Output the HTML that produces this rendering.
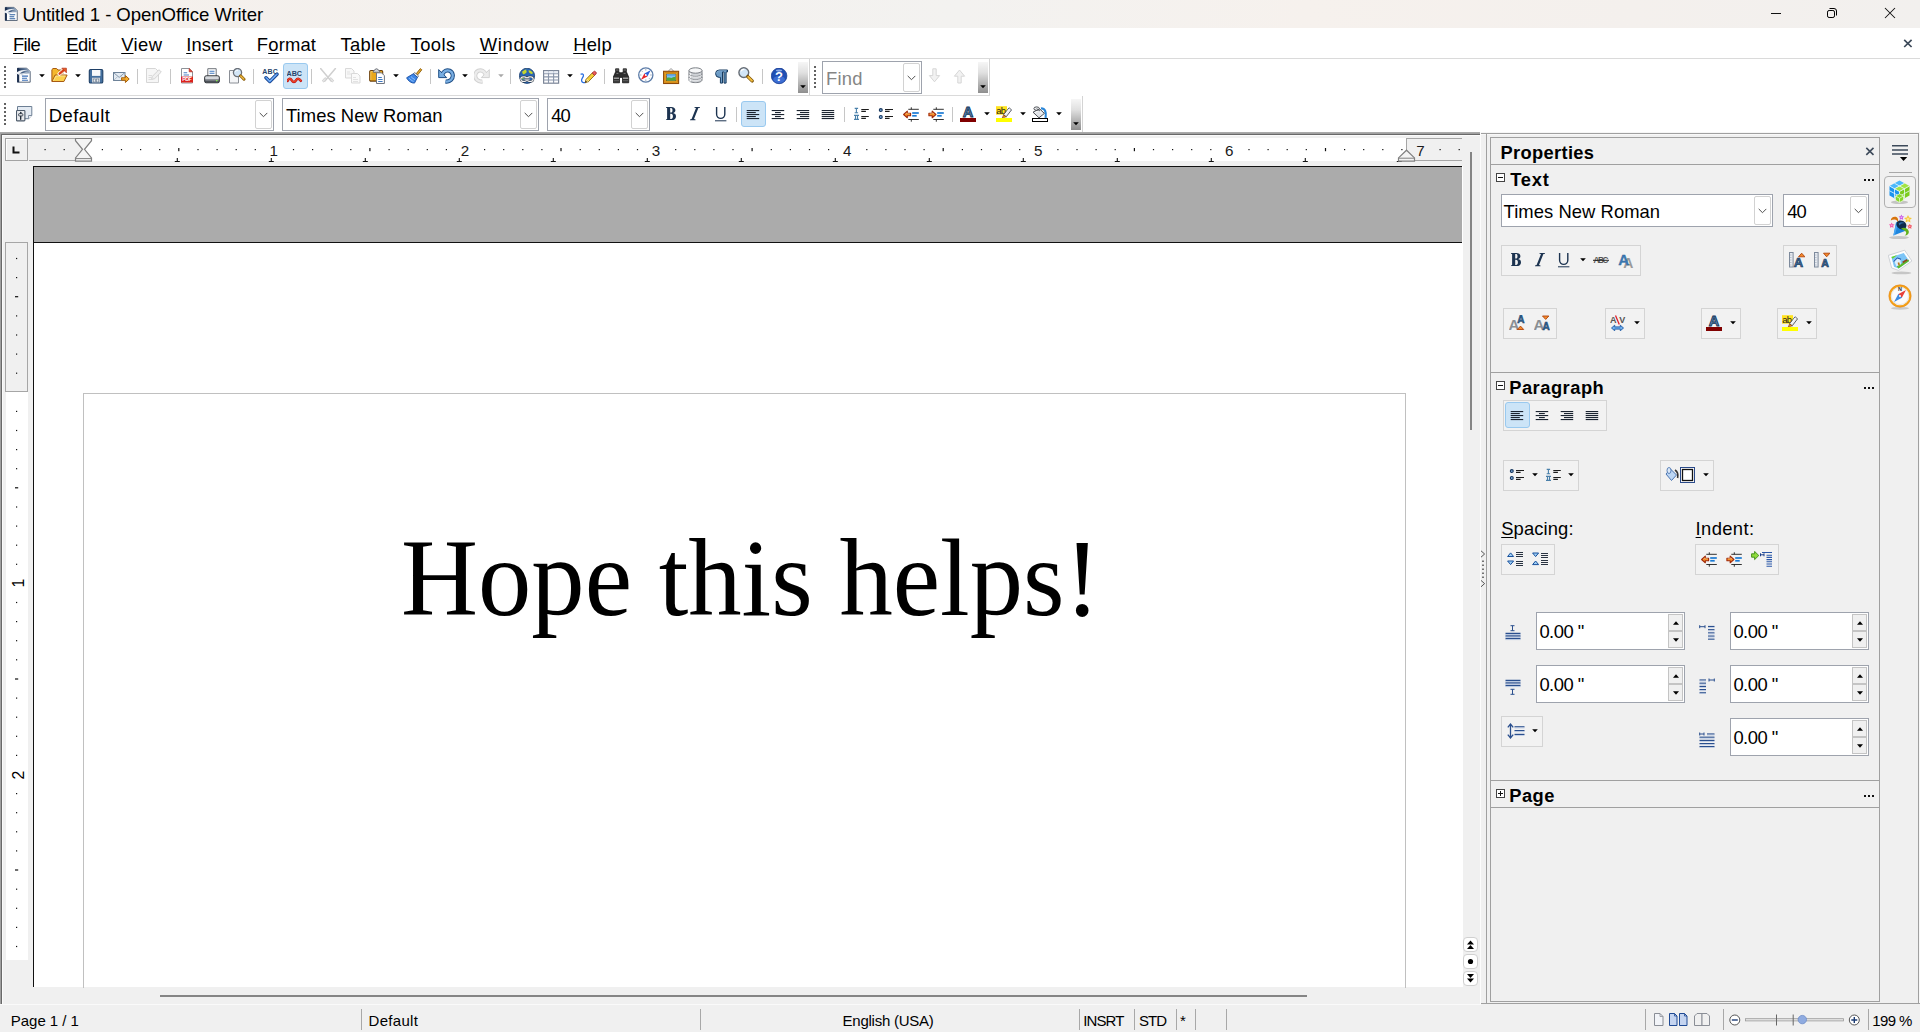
<!DOCTYPE html><html><head><meta charset="utf-8"><title>Untitled 1 - OpenOffice Writer</title><style>html,body{margin:0;padding:0;}body{width:1920px;height:1032px;overflow:hidden;background:#fff;position:relative;font-family:"Liberation Sans",sans-serif;}.a{position:absolute;display:block;}.t{white-space:nowrap;}u{text-decoration-thickness:1.2px;text-underline-offset:2.2px;}</style></head><body>
<div class="a" style="left:0px;top:0px;width:1920px;height:28px;background:linear-gradient(90deg,#f5f0ec,#f4f1ee 30%,#f3f2f0 50%,#f6f1ed 68%,#f4f0ed 85%,#f2f0ee);"></div>
<svg class="a" style="left:3px;top:5.6px" width="15" height="15.5" viewBox="0 0 16 16"><defs><linearGradient id="g0" x1="0" x2="1" y1="0" y2="0"><stop offset="0" stop-color="#1f3556"/><stop offset="0.45" stop-color="#4a6488"/><stop offset="1" stop-color="#a9b9cc"/></linearGradient></defs><path d="M2.5 1.2h9.3l3.4 3.400v10.600h-12.700z" fill="#fdfdfd" stroke="#4a586c" stroke-width="0.900"/><path d="M2.5 1.2h9.3l3.4 3.400v1.800h-12.700z" fill="url(#g0)"/><rect x="2.100" y="1.200" width="2.100" height="14" fill="#1d3050"/><path d="M0 6.800c2.800-3.200 7.400-4.600 12.600-3.600c-4.200 0.500-7 2-8.800 4.600c-1.200-0.900-2.400-1.200-3.800-1z" fill="#f0f3f7"/><path d="M5 8c1.800-1.700 4.400-2.600 8.600-2.800c-3.400 0.800-5.400 1.900-6.800 3.400z" fill="#cfd8e2"/><path d="M7 9.100h6M7 11.200h5M7 13.300h6" stroke="#2d5f9e" stroke-width="1.100"/></svg>
<span class="a t" id="title" style="left:22.40px;top:5.51px;font-size:18.6px;line-height:18.6px;font-family:'Liberation Sans',sans-serif;color:#000;letter-spacing:-0.084px;">Untitled 1 - OpenOffice Writer</span>
<div class="a" style="left:1771px;top:13px;width:10px;height:1px;background:#111;"></div>
<svg class="a" style="left:1826px;top:7px" width="12" height="12" viewBox="0 0 12 12"><rect x="1.5" y="3.5" width="7" height="7" rx="1.600" fill="none" stroke="#000" stroke-width="1"/><path d="M3.500 1.500h4.500a2.500 2.500 0 0 1 2.500 2.500v4.500" fill="none" stroke="#000" stroke-width="1"/></svg>
<svg class="a" style="left:1884px;top:7px" width="12" height="12" viewBox="0 0 12 12"><path d="M1 1l10 10M11 1l-10 10" stroke="#111" stroke-width="1.05"/></svg>
<div class="a" style="left:0px;top:28px;width:1920px;height:30px;background:#fff;"></div>
<span class="a t" id="mFile" style="left:13.00px;top:35.62px;font-size:18.4px;line-height:18.4px;font-family:'Liberation Sans',sans-serif;color:#000;letter-spacing:-0.667px;"><u>F</u>ile</span>
<span class="a t" id="mEdit" style="left:66.20px;top:35.62px;font-size:18.4px;line-height:18.4px;font-family:'Liberation Sans',sans-serif;color:#000;letter-spacing:-0.433px;"><u>E</u>dit</span>
<span class="a t" id="mView" style="left:121.20px;top:35.62px;font-size:18.4px;line-height:18.4px;font-family:'Liberation Sans',sans-serif;color:#000;letter-spacing:0.400px;"><u>V</u>iew</span>
<span class="a t" id="mInsert" style="left:186.20px;top:35.62px;font-size:18.4px;line-height:18.4px;font-family:'Liberation Sans',sans-serif;color:#000;letter-spacing:0.120px;"><u>I</u>nsert</span>
<span class="a t" id="mFormat" style="left:256.80px;top:35.62px;font-size:18.4px;line-height:18.4px;font-family:'Liberation Sans',sans-serif;color:#000;letter-spacing:0.180px;">F<u>o</u>rmat</span>
<span class="a t" id="mTable" style="left:340.40px;top:35.62px;font-size:18.4px;line-height:18.4px;font-family:'Liberation Sans',sans-serif;color:#000;letter-spacing:0.350px;">T<u>a</u>ble</span>
<span class="a t" id="mTools" style="left:410.60px;top:35.62px;font-size:18.4px;line-height:18.4px;font-family:'Liberation Sans',sans-serif;color:#000;letter-spacing:0.400px;"><u>T</u>ools</span>
<span class="a t" id="mWindow" style="left:479.80px;top:35.62px;font-size:18.4px;line-height:18.4px;font-family:'Liberation Sans',sans-serif;color:#000;letter-spacing:0.660px;"><u>W</u>indow</span>
<span class="a t" id="mHelp" style="left:573.20px;top:35.62px;font-size:18.4px;line-height:18.4px;font-family:'Liberation Sans',sans-serif;color:#000;letter-spacing:0.201px;"><u>H</u>elp</span>
<svg class="a" style="left:1903px;top:39px" width="10" height="9" viewBox="0 0 10 9"><path d="M1.2 0.8l7.4 7.2M8.6 0.8l-7.4 7.2" stroke="#3d4a5a" stroke-width="1.7"/></svg>
<div class="a" style="left:0px;top:58px;width:1920px;height:1px;background:#dadada;"></div>
<div class="a" style="left:0px;top:59px;width:1920px;height:36px;background:#fff;"></div>
<div class="a" style="left:4px;top:66px;width:2px;height:2px;background:#626262;"></div>
<div class="a" style="left:4px;top:70px;width:2px;height:2px;background:#626262;"></div>
<div class="a" style="left:4px;top:74px;width:2px;height:2px;background:#626262;"></div>
<div class="a" style="left:4px;top:78px;width:2px;height:2px;background:#626262;"></div>
<div class="a" style="left:4px;top:82px;width:2px;height:2px;background:#626262;"></div>
<div class="a" style="left:4px;top:86px;width:2px;height:2px;background:#626262;"></div>
<svg class="a" style="left:15px;top:67px" width="17" height="17" viewBox="0 0 17 17"><defs><linearGradient id="g1" x1="0" x2="1" y1="0" y2="0"><stop offset="0" stop-color="#1f3556"/><stop offset="0.45" stop-color="#4a6488"/><stop offset="1" stop-color="#a9b9cc"/></linearGradient></defs><path d="M2.5 1.2h9.3l3.4 3.400v10.600h-12.700z" fill="#fdfdfd" stroke="#4a586c" stroke-width="0.900"/><path d="M2.5 1.2h9.3l3.4 3.400v1.800h-12.700z" fill="url(#g1)"/><rect x="2.100" y="1.200" width="2.100" height="14" fill="#1d3050"/><path d="M0 6.800c2.800-3.200 7.400-4.600 12.600-3.600c-4.200 0.500-7 2-8.800 4.600c-1.200-0.900-2.400-1.200-3.800-1z" fill="#f0f3f7"/><path d="M5 8c1.800-1.700 4.400-2.600 8.600-2.800c-3.400 0.800-5.400 1.900-6.800 3.400z" fill="#cfd8e2"/><path d="M7 9.100h6M7 11.200h5M7 13.300h6" stroke="#3b6fb6" stroke-width="1.100"/></svg>
<svg class="a" style="left:51px;top:67px" width="17" height="17" viewBox="0 0 17 17"><path d="M0.900 14.200v-11.600l1.100-1.100h3.600l1.400 1.500h5.200v3.400" fill="#f4b82e" stroke="#a85a12" stroke-width="1" stroke-linejoin="round"/><path d="M0.900 14.500l3.200-6.500h12l-3.200 6.500z" fill="#fbd04e" stroke="#a85a12" stroke-width="1" stroke-linejoin="round"/><path d="M2.600 13.600l2.400-4.600h9.400" fill="none" stroke="#fde9a0" stroke-width="0.800"/><path d="M8.300 6.900l4.300-3.600" stroke="#fff" stroke-width="3.800" stroke-linecap="round"/><path d="M10.400 0.900h5.300v5.300z" fill="#fff" stroke="#fff" stroke-width="1.400" stroke-linejoin="round"/><path d="M8.600 6.700l4.200-3.500" stroke="#d8421a" stroke-width="2.300" stroke-linecap="round"/><path d="M10.800 1.200h4.600v4.600z" fill="#e85a24" stroke="#b02c10" stroke-width="0.700" stroke-linejoin="round"/></svg>
<svg class="a" style="left:87.5px;top:67.6px" width="17" height="17" viewBox="0 0 17 17"><rect x="1.300" y="1.500" width="13.500" height="13.500" rx="1.300" fill="#44709f" stroke="#1e3f66" stroke-width="1.100"/><rect x="4" y="2" width="8.400" height="5.900" fill="#f7f9fb"/><rect x="4" y="9.700" width="8" height="4.800" fill="#cdd2d8"/><rect x="5.200" y="11" width="2.200" height="3" fill="#e9ecef" stroke="#566b82" stroke-width="0.500"/><rect x="8.600" y="11" width="2.200" height="3" fill="#e9ecef" stroke="#566b82" stroke-width="0.500"/></svg>
<svg class="a" style="left:112.8px;top:67.5px" width="17" height="17" viewBox="0 0 17 17"><rect x="0.500" y="4.500" width="11.500" height="8" fill="#e4ebf2" stroke="#6d8298" stroke-width="1"/><path d="M0.800 4.800l5.400 4.600l5.400-4.600" stroke="#7d90a4" stroke-width="0.900" fill="none"/><path d="M0.800 12.200l4-3.800M11.800 12.200l-4-3.800" stroke="#a8b6c4" stroke-width="0.800" fill="none"/><path d="M8.600 9.800h3.800v-2.300l3.800 3.500l-3.800 3.500v-2.300h-3.800z" fill="#f7ae2c" stroke="#a8600a" stroke-width="1" stroke-linejoin="round"/></svg>
<svg class="a" style="left:145.8px;top:67.8px" width="17" height="17" viewBox="0 0 17 17"><path d="M0.500 0.500h9l3 3v11h-12z" fill="#f6f6f6" stroke="#d6d6d6" stroke-width="1"/><path d="M2.500 7.500h3.500M2.500 9.500h3M2.500 11.500h2.500" stroke="#dcdcdc" stroke-width="1"/><path d="M5.500 11.500l0.900-3.200l6.600-6.600l2.300 2.300l-6.600 6.600z" fill="#f0f0f0" stroke="#cfcfcf" stroke-width="0.900"/></svg>
<svg class="a" style="left:179.8px;top:67.8px" width="17" height="17" viewBox="0 0 17 17"><path d="M1.500 0.500h7.700l3.300 3.300v11.200h-11z" fill="#fff" stroke="#8e9298" stroke-width="1"/><path d="M9.200 0.500v3.300h3.300z" fill="#e8503e" stroke="#b0281c" stroke-width="0.700"/><path d="M3.600 4.800h3.600M3.600 7h5.400" stroke="#4a7fc4" stroke-width="1.100"/><rect x="1" y="8.600" width="12" height="5.900" fill="#dc221c"/><text x="7" y="13.200" text-anchor="middle" font-size="5.300" font-weight="700" fill="#fff" font-family="Liberation Sans,sans-serif" textLength="9.500">PDF</text></svg>
<svg class="a" style="left:204px;top:67.8px" width="17" height="17" viewBox="0 0 17 17"><path d="M3.800 8v-7.300h8.400v7.300" fill="#fff" stroke="#6f747b" stroke-width="1"/><path d="M5.500 3.200h5M5.500 5.300h5" stroke="#3f78c0" stroke-width="1.100"/><rect x="0.600" y="7.800" width="14.800" height="7" rx="1.600" fill="#4c5158" stroke="#2e3237" stroke-width="0.900"/><rect x="1.200" y="8.200" width="13.600" height="3.400" rx="1.200" fill="#d5d8dc"/><rect x="1.400" y="11.300" width="13.200" height="1.300" fill="#8d9299"/><rect x="12" y="12" width="1.500" height="1.300" fill="#86e84e"/></svg>
<svg class="a" style="left:228.8px;top:67.8px" width="17" height="17" viewBox="0 0 17 17"><path d="M0.500 2.500h6.500l2.500 2.500v10h-9z" fill="#f4f5f7" stroke="#8a8e95" stroke-width="1"/><circle cx="8.500" cy="4.600" r="4.100" fill="#d3e6f7" stroke="#6b7078" stroke-width="1.300"/><path d="M6.200 3.800a2.600 2.600 0 0 1 2.800-1.600" stroke="#fff" stroke-width="1" fill="none"/><path d="M11.600 7.800l3.400 3.400" stroke="#8a5c08" stroke-width="3" stroke-linecap="round"/><path d="M11.800 8l3 3" stroke="#eab53c" stroke-width="1.600" stroke-linecap="round"/></svg>
<svg class="a" style="left:262px;top:68px" width="17" height="17" viewBox="0 0 17 17"><text x="8" y="5.800" text-anchor="middle" font-size="7" font-weight="700" fill="#27466c" font-family="Liberation Sans,sans-serif" textLength="15.400">ABC</text><path d="M4 9.700l3.800 3.800l7.200-7.300" stroke="#173f86" stroke-width="3.400" fill="none" stroke-linejoin="round" stroke-linecap="round"/><path d="M4 9.700l3.800 3.800l7.200-7.300" stroke="#4a90ea" stroke-width="1.800" fill="none" stroke-linejoin="round" stroke-linecap="round"/><path d="M4.500 10l3.300 3.200l6.500-6.700" stroke="#cfe4ff" stroke-width="0.500" fill="none"/></svg>
<div class="a" style="left:283px;top:63px;width:25px;height:26px;background:#cce4f7;border:1px solid #99c9ef;box-sizing:border-box;border-radius:3px;"></div>
<svg class="a" style="left:287.4px;top:68px" width="17" height="17" viewBox="0 0 17 17"><text x="7.300" y="7.900" text-anchor="middle" font-size="7.200" font-weight="700" fill="#27466c" font-family="Liberation Sans,sans-serif" textLength="15.400">ABC</text><path d="M0.600 12.800c1.400-2.600 2.800-2.600 4.200-0.400s2.800 2.200 4.200 0s2.800-2.200 4.800 0.400" stroke="#c21414" stroke-width="2.600" fill="none" stroke-linecap="round"/><path d="M0.600 12.600c1.400-2.600 2.800-2.600 4.200-0.400s2.800 2.200 4.200 0s2.800-2.200 4.800 0.400" stroke="#f04a2a" stroke-width="1.100" fill="none" stroke-linecap="round"/></svg>
<svg class="a" style="left:319.8px;top:67.8px" width="17" height="17" viewBox="0 0 17 17"><path d="M0.600 0.500l10.500 12.500M15.400 0.500l-10.500 12.500" stroke="#cfcfcf" stroke-width="1.500" stroke-linecap="round"/><path d="M2.200 12.800l2.800-3.200l1.500 1.300l-2.600 3.200zM13.800 12.800l-2.800-3.200l-1.500 1.300l2.600 3.200z" fill="#e6e6e6" stroke="#cdcdcd" stroke-width="0.800"/></svg>
<svg class="a" style="left:344.7px;top:67.5px" width="17" height="17" viewBox="0 0 17 17"><path d="M0.500 0.500h6l2.500 2.500v7h-8.500z" fill="#f8f8f8" stroke="#d9d9d9" stroke-width="1"/><path d="M6.500 5.500h6l2.500 2.500v7h-8.500z" fill="#fafafa" stroke="#d9d9d9" stroke-width="1"/><path d="M8 9.500h3M8 11.500h5M8 13.500h5M2 4h3M2 6h4" stroke="#e2e2e2" stroke-width="1"/></svg>
<svg class="a" style="left:368.7px;top:67.5px" width="17" height="17" viewBox="0 0 17 17"><rect x="0.700" y="2.500" width="13" height="10.600" rx="1.200" fill="#e9a81c" stroke="#6a3f0c" stroke-width="1.100"/><path d="M1.800 12v-8.400h3" fill="none" stroke="#f8d070" stroke-width="0.800"/><path d="M4.300 4.300v-1.600l1.500-0.600c0.300-1.800 3.100-1.800 3.400 0l1.500 0.600v1.600z" fill="#cfd3d8" stroke="#5c6066" stroke-width="0.800"/><path d="M7.500 4.800h5l2.900 2.900v7.800h-7.900z" fill="#fff" stroke="#707680" stroke-width="1"/><path d="M9.200 9.500h3.600M9.200 11.500h4.400M9.200 13.500h4.400" stroke="#3f78c0" stroke-width="1.100"/></svg>
<svg class="a" style="left:405.5px;top:67.7px" width="17" height="17" viewBox="0 0 17 17"><path d="M10.300 5.600l4-5l1.500 1.200l-4 5z" fill="#e9a92a" stroke="#8a5c0c" stroke-width="0.900"/><path d="M8.600 4.500l4 3.400l-1.200 1.500l-4-3.400z" fill="#eef0f3" stroke="#5c6168" stroke-width="0.800"/><path d="M7.300 5.800l4.200 3.500l-3 5.800c-3.200 0.200-6.400-2.200-7.900-5.300z" fill="#3d86e6" stroke="#1a4fa4" stroke-width="0.900" stroke-linejoin="round"/><path d="M3.200 10.200c1.400 1.600 2.800 2.600 4.400 3.200M5 8.600c1.200 1.400 2.600 2.400 4 3" stroke="#9cc6f8" stroke-width="0.900" fill="none"/></svg>
<svg class="a" style="left:438px;top:68px" width="17" height="17" viewBox="0 0 17 17"><path d="M4.300 6.600c1.200-3.600 4.600-5 7.400-3.800c3.400 1.400 4.200 6.200 1.400 9c-1.400 1.400-3.400 2-5.600 1.600" fill="none" stroke="#1f4f86" stroke-width="4.200"/><path d="M0.700 1.600v8h8z" fill="#79aee2" stroke="#1f4f86" stroke-width="1" stroke-linejoin="round"/><path d="M4.300 6.600c1.200-3.600 4.600-5 7.400-3.800c3.400 1.400 4.200 6.200 1.400 9c-1.400 1.400-3.400 2-5.600 1.600" fill="none" stroke="#79aee2" stroke-width="2.300"/></svg>
<svg class="a" style="left:474px;top:68px" width="17" height="17" viewBox="0 0 17 17"><g transform="translate(16 0) scale(-1 1)"><path d="M4.300 6.600c1.200-3.600 4.600-5 7.400-3.800c3.400 1.400 4.200 6.200 1.400 9c-1.400 1.400-3.400 2-5.600 1.600" fill="none" stroke="#d2d2d2" stroke-width="4.200"/><path d="M0.700 1.600v8h8z" fill="#ececec" stroke="#d2d2d2" stroke-width="1" stroke-linejoin="round"/><path d="M4.300 6.600c1.200-3.600 4.600-5 7.400-3.800c3.400 1.400 4.200 6.200 1.400 9c-1.400 1.400-3.400 2-5.600 1.600" fill="none" stroke="#ececec" stroke-width="2.300"/></g></svg>
<svg class="a" style="left:519px;top:68px" width="17" height="17" viewBox="0 0 17 17"><circle cx="8" cy="7.800" r="7.600" fill="#2a66b4" stroke="#163a6a" stroke-width="0.800"/><path d="M3.200 3.600c1-1.200 2.600-2 4-2.200c-0.200 1.200 0.800 1.600 0.400 2.800c-0.600 1.400-2.200 1-2.800 2.400c-0.800-0.400-1.800-1.600-1.600-3zM9.600 2.200c1.800 0.200 3.400 1.200 4.400 2.800c-0.600 1-1.800 1.200-2.600 0.600c-1-0.800-2-1.800-1.800-3.400z" fill="#c6d62c"/><path d="M2 8c1 0.400 2 0 2.600 0.800c0.400 1-0.400 2 0.200 3c-1.600-0.600-2.600-2.200-2.800-3.800z" fill="#9cc83a"/><rect x="1.800" y="8.800" width="6" height="4.600" rx="2.300" fill="none" stroke="#1f2a36" stroke-width="2.100"/><rect x="8.200" y="8.800" width="6" height="4.600" rx="2.300" fill="none" stroke="#1f2a36" stroke-width="2.100"/><rect x="1.800" y="8.800" width="6" height="4.600" rx="2.300" fill="none" stroke="#f4f4f4" stroke-width="1.200"/><rect x="8.200" y="8.800" width="6" height="4.600" rx="2.300" fill="none" stroke="#f4f4f4" stroke-width="1.200"/><path d="M5.600 11.100h4.800" stroke="#1f2a36" stroke-width="2.100"/><path d="M5.400 11.100h5.200" stroke="#f4f4f4" stroke-width="1.100"/></svg>
<svg class="a" style="left:543px;top:67.5px" width="17" height="17" viewBox="0 0 17 17"><rect x="0.600" y="2.600" width="15" height="12.600" fill="#fdfdfe" stroke="#7c8698" stroke-width="1.200"/><path d="M0.600 5.800h15M0.600 8.900h15M0.600 12h15M5.500 2.600v12.600M10.600 2.600v12.600" stroke="#8a96aa" stroke-width="1.100"/><rect x="1.300" y="3.300" width="13.600" height="1.800" fill="#e2e8f2" opacity="0.800"/></svg>
<svg class="a" style="left:580px;top:68.5px" width="17" height="17" viewBox="0 0 17 17"><path d="M0.600 5.400c1.600-1 3.200-0.400 2.800 1.400c-0.400 2-2.200 3-1.800 5c0.400 1.800 2.800 2.400 4.400 1.400" stroke="#2a6ee0" stroke-width="1.300" fill="none"/><path d="M5.200 13.600l0.800-3.200l6.200-6.400l2.400 2.300l-6.200 6.400z" fill="#f6d038" stroke="#8c6410" stroke-width="0.900"/><path d="M7 10l2 2" stroke="#fbe88a" stroke-width="1"/><path d="M12.200 4l1.300-1.300a1.400 1.400 0 0 1 2 0l0.400 0.400a1.400 1.400 0 0 1 0 2l-1.300 1.300z" fill="#ea5a5a" stroke="#9a2a2a" stroke-width="0.800"/><path d="M5.200 13.600l0.500-1.800l1.300 1.300z" fill="#2a2a2a"/><path d="M5.800 10.800l2.500 2.400" stroke="#c8c8c8" stroke-width="0.700"/></svg>
<svg class="a" style="left:613px;top:67.5px" width="17" height="17" viewBox="0 0 17 17"><path d="M2.600 0.800h3.200v2.600l1.200 1.400h2l1.200-1.400v-2.600h3.200v3l2.300 5.200v5.800h-6.200v-5.400h-3v5.400h-6.200v-5.800l2.300-5.200z" fill="#2c2c2c" stroke="#0e0e0e" stroke-width="0.700"/><path d="M0.800 10.200h5.200M10 10.200h5.200" stroke="#9a9a9a" stroke-width="1.600"/><path d="M0.800 12.800h5.200M10 12.800h5.200" stroke="#6a6a6a" stroke-width="1"/><path d="M3 2h2.400M10.600 2h2.400M3.400 5.400h2M10.600 5.400h2" stroke="#8a8a8a" stroke-width="0.800"/></svg>
<svg class="a" style="left:637.6px;top:67.3px" width="17" height="17" viewBox="0 0 17 17"><circle cx="7.800" cy="8" r="7.100" fill="#fcfdfe" stroke="#5c7ca8" stroke-width="1.300"/><path d="M7.800 2v1.600M7.800 12.400v1.600M1.800 8h1.600M12.200 8h1.600M3.600 3.800l1 1M11 11.200l1 1M3.600 12.200l1-1M11 4.800l1-1" stroke="#8a9ab0" stroke-width="0.800"/><path d="M12.600 3.200l-3.200 6.400l-3-3z" fill="#2a5fd8"/><path d="M3 12.800l3.400-6.200l3 3z" fill="#e8242a"/><circle cx="7.800" cy="8" r="0.900" fill="#fff"/></svg>
<svg class="a" style="left:662.7px;top:67.8px" width="17" height="17" viewBox="0 0 17 17"><path d="M5.500 3l2.500-2.500l2.500 2.500" fill="none" stroke="#8a8a8a" stroke-width="0.900"/><rect x="0.600" y="3.300" width="15" height="12.200" fill="#f2b32c" stroke="#8e4a0a" stroke-width="1.100"/><rect x="1.900" y="4.600" width="12.400" height="9.600" fill="none" stroke="#c8780e" stroke-width="0.800"/><rect x="3.300" y="6" width="9.600" height="6.800" fill="#7cc0f2" stroke="#7a4408" stroke-width="0.700"/><path d="M3.600 12.500v-2.600c2-0.600 3.600-0.400 5 0.200c1.600-1.400 3-1.400 4-0.800v3.200z" fill="#4da83a"/><path d="M3.600 6.400h9v1.400h-9z" fill="#5aa4e8"/></svg>
<svg class="a" style="left:687.75px;top:67.4px" width="17" height="17" viewBox="0 0 17 17"><path d="M1 3.500v9.500c0 1.600 3 2.600 6.500 2.600s6.500-1 6.500-2.600v-9.500" fill="#d0d3d7" stroke="#7c8086" stroke-width="1"/><path d="M2.200 5.800v8.600" stroke="#f4f5f6" stroke-width="1.400"/><ellipse cx="7.500" cy="3.500" rx="6.500" ry="2.700" fill="#f6f7f8" stroke="#7c8086" stroke-width="1"/><path d="M1 6.800c0 1.600 3 2.600 6.500 2.600s6.500-1 6.500-2.600M1 10c0 1.600 3 2.600 6.500 2.600s6.500-1 6.500-2.600" fill="none" stroke="#7c8086" stroke-width="1"/><path d="M1.200 7.900c0.600 1.400 3.200 2.200 6.300 2.200s5.700-0.800 6.300-2.200M1.200 11.100c0.600 1.400 3.200 2.200 6.300 2.200s5.700-0.800 6.300-2.200" fill="none" stroke="#f2f3f4" stroke-width="0.800"/></svg>
<svg class="a" style="left:712.5px;top:68px" width="17" height="17" viewBox="0 0 17 17"><path d="M6.300 9.400a3.700 3.700 0 0 1 0-7.400h8.200v1.900h-1.400v11.200h-2.100v-11.200h-1.500v11.200h-2.100v-5.700z" fill="#6d9cc6" stroke="#163a5e" stroke-width="1" stroke-linejoin="round"/><path d="M3.600 5.200c0-1.600 1.400-2.400 2.800-2.400h7" fill="none" stroke="#8db4d8" stroke-width="0.700"/></svg>
<svg class="a" style="left:737.5px;top:67.2px" width="17" height="17" viewBox="0 0 17 17"><circle cx="5.800" cy="5.600" r="4.900" fill="#d2e6f8" stroke="#666c74" stroke-width="1.400"/><path d="M3 4.400a3 3 0 0 1 3.400-2" stroke="#fff" stroke-width="1.100" fill="none"/><path d="M9.800 9.600l4.400 4.300" stroke="#7a5006" stroke-width="3.400" stroke-linecap="round"/><path d="M10.200 10l3.800 3.700" stroke="#f0bc3e" stroke-width="1.900" stroke-linecap="round"/></svg>
<svg class="a" style="left:771px;top:67.9px" width="17" height="17" viewBox="0 0 17 17"><circle cx="8.100" cy="7.900" r="7.800" fill="#1f4fb4" stroke="#0e348c" stroke-width="0.700"/><ellipse cx="8.100" cy="11.500" rx="5.800" ry="3.400" fill="#4a7ce0" opacity="0.700"/><ellipse cx="8.100" cy="2.600" rx="3.200" ry="1.100" fill="#a8c0f0" opacity="0.800"/><text x="8.100" y="12.700" text-anchor="middle" font-size="13" font-weight="700" fill="#fff" font-family="Liberation Sans,sans-serif">?</text></svg>
<svg class="a" style="left:39px;top:74px" width="6" height="4" viewBox="0 0 6 4"><path d="M0.200 0.200h5.600l-2.800 3.100z" fill="#000"/></svg>
<svg class="a" style="left:75px;top:74px" width="6" height="4" viewBox="0 0 6 4"><path d="M0.200 0.200h5.600l-2.800 3.100z" fill="#000"/></svg>
<svg class="a" style="left:393px;top:74px" width="6" height="4" viewBox="0 0 6 4"><path d="M0.200 0.200h5.600l-2.800 3.100z" fill="#000"/></svg>
<svg class="a" style="left:462px;top:74px" width="6" height="4" viewBox="0 0 6 4"><path d="M0.200 0.200h5.600l-2.800 3.100z" fill="#000"/></svg>
<svg class="a" style="left:567px;top:74px" width="6" height="4" viewBox="0 0 6 4"><path d="M0.200 0.200h5.600l-2.800 3.100z" fill="#000"/></svg>
<svg class="a" style="left:498px;top:74px" width="6" height="4" viewBox="0 0 6 4"><path d="M0.200 0.200h5.600l-2.800 3.100z" fill="#a8a8a8"/></svg>
<div class="a" style="left:137px;top:69px;width:1px;height:15px;background:#c6c6c6;"></div>
<div class="a" style="left:170px;top:69px;width:1px;height:15px;background:#c6c6c6;"></div>
<div class="a" style="left:253px;top:69px;width:1px;height:15px;background:#c6c6c6;"></div>
<div class="a" style="left:311px;top:69px;width:1px;height:15px;background:#c6c6c6;"></div>
<div class="a" style="left:430px;top:69px;width:1px;height:15px;background:#c6c6c6;"></div>
<div class="a" style="left:510px;top:69px;width:1px;height:15px;background:#c6c6c6;"></div>
<div class="a" style="left:604px;top:69px;width:1px;height:15px;background:#c6c6c6;"></div>
<div class="a" style="left:762px;top:69px;width:1px;height:15px;background:#c6c6c6;"></div>
<div class="a" style="left:798px;top:62px;width:10px;height:31px;background:linear-gradient(#f6f6f6,#e0e0e0 35%,#8e8e8e);"></div>
<svg class="a" style="left:800px;top:85px" width="6" height="4" viewBox="0 0 6 4"><path d="M0.200 0.200h5.600l-2.800 3.100z" fill="#000"/></svg>
<div class="a" style="left:809px;top:59px;width:1px;height:37px;background:#d4d4d4;"></div>
<div class="a" style="left:814px;top:66px;width:2px;height:2px;background:#626262;"></div>
<div class="a" style="left:814px;top:70px;width:2px;height:2px;background:#626262;"></div>
<div class="a" style="left:814px;top:74px;width:2px;height:2px;background:#626262;"></div>
<div class="a" style="left:814px;top:78px;width:2px;height:2px;background:#626262;"></div>
<div class="a" style="left:814px;top:82px;width:2px;height:2px;background:#626262;"></div>
<div class="a" style="left:814px;top:86px;width:2px;height:2px;background:#626262;"></div>
<div class="a" style="left:822px;top:61px;width:100px;height:33px;background:#fff;border:1px solid #9ea3ad;box-sizing:border-box;"></div>
<div class="a" style="left:903px;top:63px;width:17px;height:29px;background:#fff;border:1px solid #d2d2d2;box-sizing:border-box;border-radius:2px;"></div>
<svg class="a" style="left:907.0px;top:75.0px" width="9" height="6" viewBox="0 0 9 6"><path d="M0.7 0.9l3.8 3.8 3.8-3.8" fill="none" stroke="#505050" stroke-width="1"/></svg>
<span class="a t" id="find" style="left:826.00px;top:69.82px;font-size:18.4px;line-height:18.4px;font-family:'Liberation Sans',sans-serif;color:#858585;letter-spacing:0.201px;">Find</span>
<svg class="a" style="left:927px;top:68px" width="16" height="16" viewBox="0 0 16 16"><path d="M5.800 0.800h3.400v6.800h3.400l-5.100 6.200l-5.100-6.200h3.400z" fill="#f2f2f2" stroke="#d6d6d6" stroke-width="1" stroke-linejoin="round"/></svg>
<svg class="a" style="left:952px;top:69px" width="16" height="16" viewBox="0 0 16 16"><path d="M5.800 14h3.400v-6.800h3.400l-5.100-6.200l-5.100 6.200h3.400z" fill="#f2f2f2" stroke="#d6d6d6" stroke-width="1" stroke-linejoin="round"/></svg>
<div class="a" style="left:978px;top:62px;width:10px;height:31px;background:linear-gradient(#f6f6f6,#e0e0e0 35%,#8e8e8e);"></div>
<svg class="a" style="left:980px;top:85px" width="6" height="4" viewBox="0 0 6 4"><path d="M0.200 0.200h5.600l-2.800 3.100z" fill="#000"/></svg>
<div class="a" style="left:989px;top:59px;width:1px;height:37px;background:#d4d4d4;"></div>
<div class="a" style="left:0px;top:95px;width:990px;height:1px;background:#dadada;"></div>
<div class="a" style="left:0px;top:96px;width:1920px;height:36px;background:#fff;"></div>
<div class="a" style="left:4px;top:103px;width:2px;height:2px;background:#626262;"></div>
<div class="a" style="left:4px;top:107px;width:2px;height:2px;background:#626262;"></div>
<div class="a" style="left:4px;top:111px;width:2px;height:2px;background:#626262;"></div>
<div class="a" style="left:4px;top:115px;width:2px;height:2px;background:#626262;"></div>
<div class="a" style="left:4px;top:119px;width:2px;height:2px;background:#626262;"></div>
<div class="a" style="left:4px;top:123px;width:2px;height:2px;background:#626262;"></div>
<svg class="a" style="left:16px;top:105px" width="17" height="17" viewBox="0 0 17 17"><path d="M1.500 1.500h14.300v9l-3.200 3.200h-11.100z" fill="#e4ebf3" stroke="#6d7f94" stroke-width="1"/><path d="M12.600 13.700v-3.200h3.200" fill="#fbfcfd" stroke="#6d7f94" stroke-width="0.900"/><rect x="0.500" y="5.500" width="8.400" height="10.400" rx="0.800" fill="#e9ebee" stroke="#4c5a6a" stroke-width="1.100"/><path d="M4.700 7.300v7" stroke="#1a2430" stroke-width="1.300" stroke-linecap="round"/><rect x="2.600" y="8.700" width="4.200" height="2.200" rx="0.600" fill="#f4f4f4" stroke="#2a3644" stroke-width="0.900"/></svg>
<div class="a" style="left:45px;top:98px;width:229px;height:33px;background:#fff;border:1px solid #9ea3ad;box-sizing:border-box;"></div>
<div class="a" style="left:255px;top:100px;width:17px;height:29px;background:#fff;border:1px solid #d2d2d2;box-sizing:border-box;border-radius:2px;"></div>
<svg class="a" style="left:259.0px;top:112.0px" width="9" height="6" viewBox="0 0 9 6"><path d="M0.7 0.9l3.8 3.8 3.8-3.8" fill="none" stroke="#505050" stroke-width="1"/></svg>
<span class="a t" id="tbDefault" style="left:48.80px;top:106.92px;font-size:18.4px;line-height:18.4px;font-family:'Liberation Sans',sans-serif;color:#000;letter-spacing:0.483px;">Default</span>
<div class="a" style="left:282px;top:98px;width:257px;height:33px;background:#fff;border:1px solid #9ea3ad;box-sizing:border-box;"></div>
<div class="a" style="left:520px;top:100px;width:17px;height:29px;background:#fff;border:1px solid #d2d2d2;box-sizing:border-box;border-radius:2px;"></div>
<svg class="a" style="left:524.0px;top:112.0px" width="9" height="6" viewBox="0 0 9 6"><path d="M0.7 0.9l3.8 3.8 3.8-3.8" fill="none" stroke="#505050" stroke-width="1"/></svg>
<span class="a t" id="tbFont" style="left:286.00px;top:106.92px;font-size:18.4px;line-height:18.4px;font-family:'Liberation Sans',sans-serif;color:#000;letter-spacing:0.063px;">Times New Roman</span>
<div class="a" style="left:547px;top:98px;width:103px;height:33px;background:#fff;border:1px solid #9ea3ad;box-sizing:border-box;"></div>
<div class="a" style="left:631px;top:100px;width:17px;height:29px;background:#fff;border:1px solid #d2d2d2;box-sizing:border-box;border-radius:2px;"></div>
<svg class="a" style="left:635.0px;top:112.0px" width="9" height="6" viewBox="0 0 9 6"><path d="M0.7 0.9l3.8 3.8 3.8-3.8" fill="none" stroke="#505050" stroke-width="1"/></svg>
<span class="a t" id="tbSize" style="left:551.20px;top:106.92px;font-size:18.4px;line-height:18.4px;font-family:'Liberation Sans',sans-serif;color:#000;letter-spacing:-1.000px;">40</span>
<svg class="a" style="left:662.8px;top:105.8px" width="16" height="16" viewBox="0 0 16 16"><path fill-rule="evenodd" d="M3 1h5.200c2.800 0 4.200 1.300 4.200 3.200c0 1.500-0.900 2.500-2.400 2.900c1.900 0.300 3 1.500 3 3.300c0 2.300-1.700 3.700-4.700 3.700h-5.300v-0.700l1.100-0.300v-11.100l-1.100-0.300zM7.200 2.100v4.500h0.700c1.100 0 1.600-0.800 1.600-2.300s-0.500-2.200-1.600-2.200zM7.200 7.700v5.300h0.900c1.200 0 1.800-0.900 1.800-2.700s-0.600-2.600-1.800-2.600z" fill="#1c3350"/></svg>
<svg class="a" style="left:686px;top:105.8px" width="16" height="16" viewBox="0 0 16 16"><path d="M8.500 1h5.500v0.800l-1.600 0.300l-4.400 11l1.500 0.300v0.800h-5.500v-0.800l1.600-0.300l4.400-11l-1.500-0.300z" fill="#1c3350"/></svg>
<svg class="a" style="left:713.2px;top:105.7px" width="16" height="16" viewBox="0 0 16 16"><path d="M3.600 1v7.300a4.100 4.100 0 0 0 8.200 0v-7.300" fill="none" stroke="#1c3350" stroke-width="1.400"/><path d="M2 14.800h11.400" stroke="#1c3350" stroke-width="1"/></svg>
<div class="a" style="left:736px;top:107px;width:1px;height:15px;background:#c6c6c6;"></div>
<div class="a" style="left:741px;top:101px;width:25px;height:26px;background:#cce4f7;border:1px solid #99c9ef;box-sizing:border-box;border-radius:3px;"></div>
<svg class="a" style="left:745px;top:106px" width="16" height="16" viewBox="0 0 16 16"><rect x="1.7" y="4" width="12.5" height="1.100" fill="#1b2430"/><rect x="1.7" y="6" width="9.1" height="1.100" fill="#1b2430"/><rect x="1.7" y="8" width="12.5" height="1.100" fill="#1b2430"/><rect x="1.7" y="10" width="9.1" height="1.100" fill="#1b2430"/><rect x="1.7" y="12" width="12.5" height="1.100" fill="#1b2430"/></svg>
<svg class="a" style="left:770px;top:106px" width="16" height="16" viewBox="0 0 16 16"><rect x="1.7" y="4" width="12.5" height="1.100" fill="#1b2430"/><rect x="5" y="6" width="5.8" height="1.100" fill="#1b2430"/><rect x="1.7" y="8" width="12.5" height="1.100" fill="#1b2430"/><rect x="5" y="10" width="5.8" height="1.100" fill="#1b2430"/><rect x="1.7" y="12" width="12.5" height="1.100" fill="#1b2430"/></svg>
<svg class="a" style="left:795px;top:106px" width="16" height="16" viewBox="0 0 16 16"><rect x="1.7" y="4" width="12.5" height="1.100" fill="#1b2430"/><rect x="5" y="6" width="9.2" height="1.100" fill="#1b2430"/><rect x="1.7" y="8" width="12.5" height="1.100" fill="#1b2430"/><rect x="5" y="10" width="9.2" height="1.100" fill="#1b2430"/><rect x="1.7" y="12" width="12.5" height="1.100" fill="#1b2430"/></svg>
<svg class="a" style="left:820px;top:106px" width="16" height="16" viewBox="0 0 16 16"><rect x="1.7" y="4" width="12.5" height="1.100" fill="#1b2430"/><rect x="1.7" y="6" width="12.5" height="1.100" fill="#1b2430"/><rect x="1.7" y="8" width="12.5" height="1.100" fill="#1b2430"/><rect x="1.7" y="10" width="12.5" height="1.100" fill="#1b2430"/><rect x="1.7" y="12" width="12.5" height="1.100" fill="#1b2430"/></svg>
<div class="a" style="left:844px;top:107px;width:1px;height:15px;background:#c6c6c6;"></div>
<svg class="a" style="left:853px;top:106px" width="16" height="16" viewBox="0 0 16 16"><path d="M1.700 2.400h3.400M3.400 2.400v4.400M1.700 6.800h3.400" stroke="#4a80aa" stroke-width="1.100"/><path d="M1 9.400h5M2.500 9.400v4M4.500 9.400v4M1 13.400h5" stroke="#4a80aa" stroke-width="1.100"/><path d="M8.3 3.500h7.5M8.3 5.400h4.6M8.3 10.500h7.5M8.3 12.400h4.6" stroke="#1c1c1c" stroke-width="1.100"/></svg>
<svg class="a" style="left:878px;top:106px" width="16" height="16" viewBox="0 0 16 16"><circle cx="2.800" cy="4.100" r="1.450" fill="#7aa6d6" stroke="#17375e" stroke-width="1.100"/><circle cx="2.800" cy="11" r="1.450" fill="#7aa6d6" stroke="#17375e" stroke-width="1.100"/><path d="M7 3.500h8M7 5.400h4.6M7 10.500h8M7 12.400h4.6" stroke="#1c1c1c" stroke-width="1.100"/></svg>
<svg class="a" style="left:903px;top:106px" width="16" height="16" viewBox="0 0 16 16"><path d="M5.300 3.300h10.500M5.300 13.500h10.500M8.300 1.300v2M8.300 13.500v2.200" stroke="#1c1c1c" stroke-width="0.900"/><path d="M9.200 7h6.600" stroke="#1a7ad4" stroke-width="1.700"/><path d="M9.200 9.800h4.500" stroke="#1a7ad4" stroke-width="1.700"/><path d="M0.600 8.500l3.700-3.300v2h3.300v2.600h-3.300v2z" fill="#f58a1e" stroke="#a0280a" stroke-width="1.100" stroke-linejoin="round"/><path d="M2.300 8.300l1.800-1.500v1h2.700" fill="none" stroke="#fdd08a" stroke-width="0.600"/></svg>
<svg class="a" style="left:928px;top:106px" width="16" height="16" viewBox="0 0 16 16"><path d="M5.300 3.300h10.500M5.300 13.500h10.500M8.300 1.300v2M8.300 13.500v2.200" stroke="#1c1c1c" stroke-width="0.900"/><path d="M9.200 7h6.600" stroke="#1a7ad4" stroke-width="1.700"/><path d="M9.200 9.800h4.500" stroke="#1a7ad4" stroke-width="1.700"/><path d="M7.900 8.500l-3.700-3.300v2h-3.300v2.600h3.300v2z" fill="#f58a1e" stroke="#a0280a" stroke-width="1.100" stroke-linejoin="round"/><path d="M6.200 8.300l-1.800-1.500v1h-2.700" fill="none" stroke="#fdd08a" stroke-width="0.600"/></svg>
<div class="a" style="left:952px;top:107px;width:1px;height:15px;background:#c6c6c6;"></div>
<svg class="a" style="left:960px;top:106px" width="16" height="16" viewBox="0 0 16 16"><text x="8.100" y="10.800" text-anchor="middle" font-size="14.600" font-weight="700" fill="#5a88b4" stroke="#17375a" stroke-width="0.900" font-family="Liberation Sans,sans-serif">A</text><rect x="0" y="12" width="16" height="4" fill="#800000"/></svg>
<svg class="a" style="left:984px;top:112px" width="6" height="4" viewBox="0 0 6 4"><path d="M0.200 0.200h5.600l-2.800 3.100z" fill="#000"/></svg>
<svg class="a" style="left:996px;top:106px" width="16" height="16" viewBox="0 0 16 16"><rect x="0" y="0.200" width="11" height="8.500" fill="#ffe21e"/><text x="0.200" y="7.600" font-size="9.400" fill="#1c1c1c" font-family="Liberation Sans,sans-serif" textLength="9.800">ab</text><path d="M7.600 8.800l5.400-7l2.600 2l-5.400 7z" fill="#eceef2" stroke="#4c5058" stroke-width="0.900"/><path d="M9 8.600l4.600-6" stroke="#fff" stroke-width="0.900"/><path d="M7.600 8.800l2.600 2l-4 1.300z" fill="#ea8a2a" stroke="#7a4008" stroke-width="0.600"/><rect x="0" y="12" width="16" height="4" fill="#ffff00"/></svg>
<svg class="a" style="left:1020px;top:112px" width="6" height="4" viewBox="0 0 6 4"><path d="M0.200 0.200h5.600l-2.800 3.100z" fill="#000"/></svg>
<svg class="a" style="left:1032px;top:106px" width="16" height="16" viewBox="0 0 16 16"><path d="M9 2.500c3.600-0.600 5.600 3 4.600 9.400" fill="none" stroke="#2a86d8" stroke-width="2.200"/><path d="M1 6.200l6.600-3.400l4.800 4.600l-5.400 4.400z" fill="#e2e5e9" stroke="#3c4046" stroke-width="0.900" stroke-linejoin="round"/><path d="M3 6.600l4-2.200l3.400 3.200" fill="none" stroke="#fff" stroke-width="0.900"/><ellipse cx="4.600" cy="2.600" rx="2.700" ry="1.700" fill="#f0f2f4" stroke="#3c4046" stroke-width="0.900"/><path d="M4.600 2.600l3.400 2.400" stroke="#3c4046" stroke-width="0.800"/><rect x="0.500" y="12.500" width="15" height="3" fill="#fff" stroke="#000" stroke-width="1"/></svg>
<svg class="a" style="left:1056px;top:112px" width="6" height="4" viewBox="0 0 6 4"><path d="M0.200 0.200h5.600l-2.800 3.100z" fill="#000"/></svg>
<div class="a" style="left:1071px;top:99px;width:10px;height:31px;background:linear-gradient(#f6f6f6,#e0e0e0 35%,#8e8e8e);"></div>
<svg class="a" style="left:1073px;top:122px" width="6" height="4" viewBox="0 0 6 4"><path d="M0.200 0.200h5.600l-2.800 3.100z" fill="#000"/></svg>
<div class="a" style="left:1082px;top:96px;width:1px;height:37px;background:#d4d4d4;"></div>
<div class="a" style="left:0px;top:132px;width:1920px;height:872px;background:#f0f0f0;"></div>
<div class="a" style="left:0px;top:132px;width:1480px;height:1px;background:#aaaaaa;"></div>
<div class="a" style="left:0px;top:133px;width:1480px;height:1px;background:#a0a0a0;"></div>
<div class="a" style="left:0px;top:134px;width:1480px;height:1px;background:#696969;"></div>
<div class="a" style="left:2px;top:135px;width:1478px;height:1px;background:#fbfbfb;"></div>
<div class="a" style="left:0px;top:134px;width:1px;height:870px;background:#a0a0a0;"></div>
<div class="a" style="left:1px;top:135px;width:1px;height:869px;background:#696969;"></div>
<div class="a" style="left:2px;top:135px;width:1px;height:869px;background:#fbfbfb;"></div>
<div class="a" style="left:5px;top:138px;width:23px;height:23px;background:#f0f0f0;border:1px solid #a3a3a3;box-sizing:border-box;"></div>
<div class="a" style="left:6px;top:139px;width:21px;height:1px;background:#fdfdfd;"></div>
<div class="a" style="left:6px;top:139px;width:1px;height:21px;background:#fdfdfd;"></div>
<svg class="a" style="left:12px;top:146px" width="8" height="8" viewBox="0 0 8 8"><path d="M1.5 0.5v6h6" fill="none" stroke="#111" stroke-width="2"/></svg>
<div class="a" style="left:29px;top:138px;width:1433px;height:23px;background:#fff;"></div>
<div class="a" style="left:29px;top:138px;width:54px;height:23px;background:#f0f0f0;"></div>
<div class="a" style="left:29px;top:138px;width:54px;height:1px;background:#a6a6a6;"></div>
<div class="a" style="left:29px;top:160px;width:54px;height:1px;background:#a6a6a6;"></div>
<div class="a" style="left:1406px;top:138px;width:56px;height:23px;background:#f0f0f0;"></div>
<div class="a" style="left:1406px;top:138px;width:56px;height:1px;background:#a6a6a6;"></div>
<div class="a" style="left:1406px;top:160px;width:56px;height:1px;background:#a6a6a6;"></div>
<div class="a" style="left:1406px;top:138px;width:1px;height:13px;background:#a6a6a6;"></div>
<svg class="a" style="left:0;top:138px" width="1462" height="25" viewBox="0 0 1462 25"><rect x="44.5" y="11" width="1.2" height="1.2" fill="#111"/><rect x="63.6" y="11" width="1.2" height="1.2" fill="#111"/><rect x="101.8" y="11" width="1.2" height="1.2" fill="#111"/><rect x="120.9" y="11" width="1.2" height="1.2" fill="#111"/><rect x="140.0" y="11" width="1.2" height="1.2" fill="#111"/><rect x="159.1" y="11" width="1.2" height="1.2" fill="#111"/><rect x="178.2" y="10" width="1.2" height="3.2" fill="#111"/><rect x="197.4" y="11" width="1.2" height="1.2" fill="#111"/><rect x="216.5" y="11" width="1.2" height="1.2" fill="#111"/><rect x="235.6" y="11" width="1.2" height="1.2" fill="#111"/><rect x="254.7" y="11" width="1.2" height="1.2" fill="#111"/><rect x="292.9" y="11" width="1.2" height="1.2" fill="#111"/><rect x="312.0" y="11" width="1.2" height="1.2" fill="#111"/><rect x="331.1" y="11" width="1.2" height="1.2" fill="#111"/><rect x="350.2" y="11" width="1.2" height="1.2" fill="#111"/><rect x="369.3" y="10" width="1.2" height="3.2" fill="#111"/><rect x="388.5" y="11" width="1.2" height="1.2" fill="#111"/><rect x="407.6" y="11" width="1.2" height="1.2" fill="#111"/><rect x="426.7" y="11" width="1.2" height="1.2" fill="#111"/><rect x="445.8" y="11" width="1.2" height="1.2" fill="#111"/><rect x="484.0" y="11" width="1.2" height="1.2" fill="#111"/><rect x="503.1" y="11" width="1.2" height="1.2" fill="#111"/><rect x="522.2" y="11" width="1.2" height="1.2" fill="#111"/><rect x="541.3" y="11" width="1.2" height="1.2" fill="#111"/><rect x="560.4" y="10" width="1.2" height="3.2" fill="#111"/><rect x="579.6" y="11" width="1.2" height="1.2" fill="#111"/><rect x="598.7" y="11" width="1.2" height="1.2" fill="#111"/><rect x="617.8" y="11" width="1.2" height="1.2" fill="#111"/><rect x="636.9" y="11" width="1.2" height="1.2" fill="#111"/><rect x="675.1" y="11" width="1.2" height="1.2" fill="#111"/><rect x="694.2" y="11" width="1.2" height="1.2" fill="#111"/><rect x="713.3" y="11" width="1.2" height="1.2" fill="#111"/><rect x="732.4" y="11" width="1.2" height="1.2" fill="#111"/><rect x="751.5" y="10" width="1.2" height="3.2" fill="#111"/><rect x="770.7" y="11" width="1.2" height="1.2" fill="#111"/><rect x="789.8" y="11" width="1.2" height="1.2" fill="#111"/><rect x="808.9" y="11" width="1.2" height="1.2" fill="#111"/><rect x="828.0" y="11" width="1.2" height="1.2" fill="#111"/><rect x="866.2" y="11" width="1.2" height="1.2" fill="#111"/><rect x="885.3" y="11" width="1.2" height="1.2" fill="#111"/><rect x="904.4" y="11" width="1.2" height="1.2" fill="#111"/><rect x="923.5" y="11" width="1.2" height="1.2" fill="#111"/><rect x="942.6" y="10" width="1.2" height="3.2" fill="#111"/><rect x="961.8" y="11" width="1.2" height="1.2" fill="#111"/><rect x="980.9" y="11" width="1.2" height="1.2" fill="#111"/><rect x="1000.0" y="11" width="1.2" height="1.2" fill="#111"/><rect x="1019.1" y="11" width="1.2" height="1.2" fill="#111"/><rect x="1057.3" y="11" width="1.2" height="1.2" fill="#111"/><rect x="1076.4" y="11" width="1.2" height="1.2" fill="#111"/><rect x="1095.5" y="11" width="1.2" height="1.2" fill="#111"/><rect x="1114.6" y="11" width="1.2" height="1.2" fill="#111"/><rect x="1133.8" y="10" width="1.2" height="3.2" fill="#111"/><rect x="1152.9" y="11" width="1.2" height="1.2" fill="#111"/><rect x="1172.0" y="11" width="1.2" height="1.2" fill="#111"/><rect x="1191.1" y="11" width="1.2" height="1.2" fill="#111"/><rect x="1210.2" y="11" width="1.2" height="1.2" fill="#111"/><rect x="1248.4" y="11" width="1.2" height="1.2" fill="#111"/><rect x="1267.5" y="11" width="1.2" height="1.2" fill="#111"/><rect x="1286.6" y="11" width="1.2" height="1.2" fill="#111"/><rect x="1305.7" y="11" width="1.2" height="1.2" fill="#111"/><rect x="1324.9" y="10" width="1.2" height="3.2" fill="#111"/><rect x="1344.0" y="11" width="1.2" height="1.2" fill="#111"/><rect x="1363.1" y="11" width="1.2" height="1.2" fill="#111"/><rect x="1382.2" y="11" width="1.2" height="1.2" fill="#111"/><rect x="1401.3" y="11" width="1.2" height="1.2" fill="#111"/><rect x="1439.5" y="11" width="1.2" height="1.2" fill="#111"/><rect x="1458.6" y="11" width="1.2" height="1.2" fill="#111"/><path d="M174.8 23.5h5M177.3 23.5v-3.5" stroke="#111" stroke-width="1.1" fill="none"/><path d="M268.8 23.5h5M271.3 23.5v-3.5" stroke="#111" stroke-width="1.1" fill="none"/><path d="M362.8 23.5h5M365.3 23.5v-3.5" stroke="#111" stroke-width="1.1" fill="none"/><path d="M456.8 23.5h5M459.3 23.5v-3.5" stroke="#111" stroke-width="1.1" fill="none"/><path d="M550.8 23.5h5M553.3 23.5v-3.5" stroke="#111" stroke-width="1.1" fill="none"/><path d="M644.8 23.5h5M647.3 23.5v-3.5" stroke="#111" stroke-width="1.1" fill="none"/><path d="M738.8 23.5h5M741.3 23.5v-3.5" stroke="#111" stroke-width="1.1" fill="none"/><path d="M832.8 23.5h5M835.3 23.5v-3.5" stroke="#111" stroke-width="1.1" fill="none"/><path d="M926.8 23.5h5M929.3 23.5v-3.5" stroke="#111" stroke-width="1.1" fill="none"/><path d="M1020.8 23.5h5M1023.3 23.5v-3.5" stroke="#111" stroke-width="1.1" fill="none"/><path d="M1114.8 23.5h5M1117.3 23.5v-3.5" stroke="#111" stroke-width="1.1" fill="none"/><path d="M1208.8 23.5h5M1211.3 23.5v-3.5" stroke="#111" stroke-width="1.1" fill="none"/><path d="M1302.8 23.5h5M1305.3 23.5v-3.5" stroke="#111" stroke-width="1.1" fill="none"/><path d="M1396.8 23.5h5M1399.3 23.5v-3.5" stroke="#111" stroke-width="1.1" fill="none"/><path d="M75.5 0.5h16v2.2l-7 8.6l7 8.6v3.3h-16v-3.3l7 -8.6l-7 -8.6z" fill="#f4f4f4" stroke="#808080" stroke-width="1.2"/><path d="M75.5 20.600h16" stroke="#808080" stroke-width="1"/><path d="M1398.500 23.200v-3.300l8 -7.700l8 7.700v3.300z" fill="#f4f4f4" stroke="#808080" stroke-width="1.200"/><path d="M1398.500 20.200h16" stroke="#808080" stroke-width="1"/></svg>
<span class="a t" id="rn1" style="left:269.60px;top:142.93px;font-size:15.2px;line-height:15.2px;font-family:'Liberation Sans',sans-serif;color:#1a1a1a;">1</span>
<span class="a t" id="rn2" style="left:460.70px;top:142.93px;font-size:15.2px;line-height:15.2px;font-family:'Liberation Sans',sans-serif;color:#1a1a1a;">2</span>
<span class="a t" id="rn3" style="left:651.80px;top:142.93px;font-size:15.2px;line-height:15.2px;font-family:'Liberation Sans',sans-serif;color:#1a1a1a;">3</span>
<span class="a t" id="rn4" style="left:842.90px;top:142.93px;font-size:15.2px;line-height:15.2px;font-family:'Liberation Sans',sans-serif;color:#1a1a1a;">4</span>
<span class="a t" id="rn5" style="left:1034.00px;top:142.93px;font-size:15.2px;line-height:15.2px;font-family:'Liberation Sans',sans-serif;color:#1a1a1a;">5</span>
<span class="a t" id="rn6" style="left:1225.10px;top:142.93px;font-size:15.2px;line-height:15.2px;font-family:'Liberation Sans',sans-serif;color:#1a1a1a;">6</span>
<span class="a t" id="rn7" style="left:1416.20px;top:142.93px;font-size:15.2px;line-height:15.2px;font-family:'Liberation Sans',sans-serif;color:#1a1a1a;">7</span>
<div class="a" style="left:6px;top:242px;width:22px;height:718px;background:#fff;"></div>
<div class="a" style="left:5px;top:242px;width:23px;height:150px;background:#f0f0f0;border:1px solid #a6a6a6;box-sizing:border-box;"></div>
<svg class="a" style="left:5px;top:242px" width="23" height="746" viewBox="5 242 23 746"><rect x="16" y="257.9" width="1.2" height="1.2" fill="#111"/><rect x="16" y="277.0" width="1.2" height="1.2" fill="#111"/><rect x="15" y="296.1" width="3.2" height="1.2" fill="#111"/><rect x="16" y="315.3" width="1.2" height="1.2" fill="#111"/><rect x="16" y="334.4" width="1.2" height="1.2" fill="#111"/><rect x="16" y="353.5" width="1.2" height="1.2" fill="#111"/><rect x="16" y="372.6" width="1.2" height="1.2" fill="#111"/><rect x="16" y="410.8" width="1.2" height="1.2" fill="#111"/><rect x="16" y="429.9" width="1.2" height="1.2" fill="#111"/><rect x="16" y="449.0" width="1.2" height="1.2" fill="#111"/><rect x="16" y="468.1" width="1.2" height="1.2" fill="#111"/><rect x="15" y="487.2" width="3.2" height="1.2" fill="#111"/><rect x="16" y="506.4" width="1.2" height="1.2" fill="#111"/><rect x="16" y="525.5" width="1.2" height="1.2" fill="#111"/><rect x="16" y="544.6" width="1.2" height="1.2" fill="#111"/><rect x="16" y="563.7" width="1.2" height="1.2" fill="#111"/><rect x="16" y="601.9" width="1.2" height="1.2" fill="#111"/><rect x="16" y="621.0" width="1.2" height="1.2" fill="#111"/><rect x="16" y="640.1" width="1.2" height="1.2" fill="#111"/><rect x="16" y="659.2" width="1.2" height="1.2" fill="#111"/><rect x="15" y="678.4" width="3.2" height="1.2" fill="#111"/><rect x="16" y="697.5" width="1.2" height="1.2" fill="#111"/><rect x="16" y="716.6" width="1.2" height="1.2" fill="#111"/><rect x="16" y="735.7" width="1.2" height="1.2" fill="#111"/><rect x="16" y="754.8" width="1.2" height="1.2" fill="#111"/><rect x="16" y="793.0" width="1.2" height="1.2" fill="#111"/><rect x="16" y="812.1" width="1.2" height="1.2" fill="#111"/><rect x="16" y="831.2" width="1.2" height="1.2" fill="#111"/><rect x="16" y="850.3" width="1.2" height="1.2" fill="#111"/><rect x="15" y="869.4" width="3.2" height="1.2" fill="#111"/><rect x="16" y="888.6" width="1.2" height="1.2" fill="#111"/><rect x="16" y="907.7" width="1.2" height="1.2" fill="#111"/><rect x="16" y="926.8" width="1.2" height="1.2" fill="#111"/><rect x="16" y="945.9" width="1.2" height="1.2" fill="#111"/></svg>
<span class="a t" id="vn1" style="left:0.00px;top:-12.87px;font-size:15.8px;line-height:15.8px;font-family:'Liberation Sans',sans-serif;color:#000;left:10.5px;top:575.4px;width:16px;height:16px;text-align:center;transform:rotate(-90deg);transform-origin:8px 8px;">1</span>
<span class="a t" id="vn2" style="left:0.00px;top:-12.87px;font-size:15.8px;line-height:15.8px;font-family:'Liberation Sans',sans-serif;color:#000;left:10.5px;top:766.5px;width:16px;height:16px;text-align:center;transform:rotate(-90deg);transform-origin:8px 8px;">2</span>
<div class="a" style="left:33px;top:166px;width:1430px;height:821px;background:#fff;"></div>
<div class="a" style="left:33px;top:166px;width:1429px;height:77px;background:#ababab;"></div>
<div class="a" style="left:33px;top:166px;width:1429px;height:1px;background:#111;"></div>
<div class="a" style="left:33px;top:242px;width:1429px;height:1px;background:#111;"></div>
<div class="a" style="left:33px;top:166px;width:1px;height:821px;background:#111;"></div>
<div class="a" style="left:83px;top:393px;width:1323px;height:1px;background:#c0c0c0;"></div>
<div class="a" style="left:83px;top:393px;width:1px;height:595px;background:#c0c0c0;"></div>
<div class="a" style="left:1405px;top:393px;width:1px;height:595px;background:#c0c0c0;"></div>
<span class="a t" id="doc" style="left:400.60px;top:522.88px;font-size:110.4px;line-height:110.4px;font-family:'Liberation Serif',serif;color:#000;transform:scaleX(0.9661);transform-origin:0 0;">Hope this helps!</span>
<div class="a" style="left:1470px;top:152px;width:2px;height:278px;background:#858585;"></div>
<div class="a" style="left:1463px;top:937px;width:15px;height:15px;background:#fff;border:1px solid #d0d0d0;box-sizing:border-box;border-radius:4px;"></div>
<div class="a" style="left:1463px;top:954px;width:15px;height:15px;background:#fff;border:1px solid #d0d0d0;box-sizing:border-box;border-radius:4px;"></div>
<div class="a" style="left:1463px;top:971px;width:15px;height:15px;background:#fff;border:1px solid #d0d0d0;box-sizing:border-box;border-radius:4px;"></div>
<svg class="a" style="left:1463px;top:937px" width="15" height="49" viewBox="0 0 15 49"><path d="M4 7.5l3.5-4 3.5 4zM4 12l3.5-4 3.5 4z" fill="#000"/><circle cx="7.5" cy="24.5" r="2.6" fill="#000"/><path d="M4 37l3.5 4 3.5-4zM4 41.5l3.5 4 3.5-4z" fill="#000"/></svg>
<div class="a" style="left:160px;top:995px;width:1147px;height:2px;background:#858585;"></div>
<div class="a" style="left:1480px;top:132px;width:1px;height:872px;background:#fcfcfc;"></div>
<svg class="a" style="left:1480px;top:550px" width="6" height="38" viewBox="0 0 6 38"><path d="M1 0.8l3.6 3.2l-3.6 3.2M1 30.4l3.6 3.2l-3.6 3.2" fill="none" stroke="#555" stroke-width="1"/><path d="M2.2 10.5h1.6v1.6h-1.6zM2.2 14.5h1.6v1.6h-1.6zM2.2 18.5h1.6v1.6h-1.6zM2.2 22.5h1.6v1.6h-1.6zM2.2 26.5h1.6v1.6h-1.6z" fill="#555"/></svg>
<div class="a" style="left:1481px;top:132px;width:439px;height:1px;background:#f6f6f6;"></div>
<div class="a" style="left:1481px;top:133px;width:439px;height:1px;background:#a0a0a0;"></div>
<div class="a" style="left:1481px;top:134px;width:439px;height:1px;background:#f8f8f8;"></div>
<div class="a" style="left:1486px;top:133px;width:1px;height:871px;background:#a0a0a0;"></div>
<div class="a" style="left:1918px;top:133px;width:1px;height:871px;background:#a0a0a0;"></div>
<div class="a" style="left:1919px;top:133px;width:1px;height:871px;background:#f8f8f8;"></div>
<div class="a" style="left:1481px;top:1003px;width:439px;height:1px;background:#a0a0a0;"></div>
<div class="a" style="left:1490px;top:137px;width:390px;height:865px;border:1px solid #a0a0a0;box-sizing:border-box;"></div>
<div class="a" style="left:1491px;top:164px;width:388px;height:1px;background:#a0a0a0;"></div>
<span class="a t" id="sProps" style="left:1500.40px;top:143.71px;font-size:18.3px;line-height:18.3px;font-family:'Liberation Sans',sans-serif;color:#000;font-weight:700;letter-spacing:0.355px;">Properties</span>
<svg class="a" style="left:1865px;top:147px" width="10" height="9" viewBox="0 0 10 9"><path d="M1.3 0.9l7.2 6.9M8.5 0.9l-7.2 6.9" stroke="#3d4a5a" stroke-width="1.6"/></svg>
<div class="a" style="left:1496px;top:173px;width:9px;height:9px;background:#fff;border:1px solid #444;box-sizing:border-box;"></div>
<div class="a" style="left:1498px;top:177px;width:5px;height:1px;background:#111;"></div>
<span class="a t" id="sText" style="left:1510.20px;top:170.81px;font-size:18.3px;line-height:18.3px;font-family:'Liberation Sans',sans-serif;color:#000;font-weight:700;letter-spacing:0.833px;">Text</span>
<div class="a" style="left:1864px;top:179px;width:2px;height:2px;background:#111;"></div>
<div class="a" style="left:1868px;top:179px;width:2px;height:2px;background:#111;"></div>
<div class="a" style="left:1872px;top:179px;width:2px;height:2px;background:#111;"></div>
<div class="a" style="left:1501px;top:194px;width:272px;height:33px;background:#fff;border:1px solid #9ea3ad;box-sizing:border-box;"></div>
<div class="a" style="left:1754px;top:196px;width:17px;height:29px;background:#fff;border:1px solid #d2d2d2;box-sizing:border-box;border-radius:2px;"></div>
<svg class="a" style="left:1758.0px;top:208.0px" width="9" height="6" viewBox="0 0 9 6"><path d="M0.7 0.9l3.8 3.8 3.8-3.8" fill="none" stroke="#505050" stroke-width="1"/></svg>
<span class="a t" id="sFont" style="left:1503.60px;top:202.92px;font-size:18.4px;line-height:18.4px;font-family:'Liberation Sans',sans-serif;color:#000;letter-spacing:0.057px;">Times New Roman</span>
<div class="a" style="left:1783px;top:194px;width:86px;height:33px;background:#fff;border:1px solid #9ea3ad;box-sizing:border-box;"></div>
<div class="a" style="left:1850px;top:196px;width:17px;height:29px;background:#fff;border:1px solid #d2d2d2;box-sizing:border-box;border-radius:2px;"></div>
<svg class="a" style="left:1854.0px;top:208.0px" width="9" height="6" viewBox="0 0 9 6"><path d="M0.7 0.9l3.8 3.8 3.8-3.8" fill="none" stroke="#505050" stroke-width="1"/></svg>
<span class="a t" id="sSize" style="left:1787.20px;top:202.92px;font-size:18.4px;line-height:18.4px;font-family:'Liberation Sans',sans-serif;color:#000;letter-spacing:-1.000px;">40</span>
<div class="a" style="left:1501px;top:245px;width:140px;height:31px;background:#f2f2f2;border:1px solid #d4d4d4;box-sizing:border-box;"></div>
<svg class="a" style="left:1507.8px;top:252px" width="16" height="16" viewBox="0 0 16 16"><path fill-rule="evenodd" d="M3 1h5.200c2.800 0 4.200 1.300 4.200 3.200c0 1.500-0.900 2.500-2.400 2.900c1.900 0.300 3 1.500 3 3.300c0 2.300-1.700 3.700-4.700 3.700h-5.300v-0.700l1.100-0.300v-11.100l-1.100-0.300zM7.200 2.100v4.500h0.700c1.100 0 1.600-0.800 1.600-2.300s-0.500-2.200-1.600-2.200zM7.200 7.700v5.300h0.900c1.200 0 1.800-0.900 1.800-2.700s-0.600-2.600-1.800-2.600z" fill="#1c3350"/></svg>
<svg class="a" style="left:1531.3px;top:252px" width="16" height="16" viewBox="0 0 16 16"><path d="M8.500 1h5.500v0.800l-1.600 0.300l-4.400 11l1.500 0.300v0.800h-5.500v-0.800l1.600-0.300l4.400-11l-1.500-0.300z" fill="#1c3350"/></svg>
<svg class="a" style="left:1556.3px;top:251.9px" width="16" height="16" viewBox="0 0 16 16"><path d="M3.600 1v7.300a4.100 4.100 0 0 0 8.200 0v-7.300" fill="none" stroke="#1c3350" stroke-width="1.400"/><path d="M2 14.800h11.400" stroke="#1c3350" stroke-width="1"/></svg>
<svg class="a" style="left:1579.5px;top:258px" width="6" height="4" viewBox="0 0 6 4"><path d="M0.200 0.200h5.600l-2.800 3.100z" fill="#000"/></svg>
<svg class="a" style="left:1593px;top:252px" width="16" height="16" viewBox="0 0 16 16"><text x="8" y="11.200" text-anchor="middle" font-size="8.200" font-weight="700" fill="#555" font-family="Liberation Sans,sans-serif" textLength="14.800">ABC</text><path d="M0 8.300h16" stroke="#222" stroke-width="1"/></svg>
<svg class="a" style="left:1618px;top:252px" width="16" height="16" viewBox="0 0 16 16"><text x="10.300" y="15.600" text-anchor="middle" font-size="14" font-weight="700" fill="#9a9a9a" font-family="Liberation Sans,sans-serif">A</text><text x="5.600" y="12.600" text-anchor="middle" font-size="15" font-weight="700" fill="#3c7ab4" stroke="#2a5f94" stroke-width="0.300" font-family="Liberation Sans,sans-serif">A</text></svg>
<div class="a" style="left:1783px;top:245px;width:54px;height:31px;background:#f2f2f2;border:1px solid #d4d4d4;box-sizing:border-box;"></div>
<svg class="a" style="left:1789px;top:252px" width="16" height="16" viewBox="0 0 16 16"><rect x="0.500" y="0.500" width="3.600" height="14.500" fill="#e6eaf0" stroke="#7d8a9c" stroke-width="1"/><path d="M1 3h1.600M1 5.500h1.600M1 8h1.600M1 10.500h1.600M1 13h1.600" stroke="#a8b2c0" stroke-width="0.700"/><text x="9.500" y="15.300" text-anchor="middle" font-size="13" font-weight="700" fill="#3e6f9e" stroke="#17375a" stroke-width="0.700" font-family="Liberation Sans,sans-serif">A</text><path d="M9.500 4.800l3.200-3.600l3.200 3.600z" fill="#f58a2a" stroke="#b0440c" stroke-width="0.900" stroke-linejoin="round"/></svg>
<svg class="a" style="left:1814px;top:252px" width="16" height="16" viewBox="0 0 16 16"><rect x="0.500" y="0.500" width="3.600" height="14.500" fill="#e6eaf0" stroke="#7d8a9c" stroke-width="1"/><path d="M1 3h1.600M1 5.500h1.600M1 8h1.600M1 10.500h1.600M1 13h1.600" stroke="#a8b2c0" stroke-width="0.700"/><text x="11" y="15.300" text-anchor="middle" font-size="10.500" font-weight="700" fill="#3e6f9e" stroke="#17375a" stroke-width="0.700" font-family="Liberation Sans,sans-serif">A</text><path d="M9.500 1.200h6.400l-3.200 3.600z" fill="#f58a2a" stroke="#b0440c" stroke-width="0.900" stroke-linejoin="round"/></svg>
<div class="a" style="left:1503px;top:308px;width:54px;height:31px;background:#f2f2f2;border:1px solid #d4d4d4;box-sizing:border-box;"></div>
<svg class="a" style="left:1508.5px;top:315px" width="16" height="16" viewBox="0 0 16 16"><text x="4.800" y="14.500" text-anchor="middle" font-size="15" font-weight="700" fill="#8a8f94" font-family="Liberation Sans,sans-serif">A</text><text x="11.800" y="8.300" text-anchor="middle" font-size="10" font-weight="700" fill="#2f679a" stroke="#17375a" stroke-width="0.500" font-family="Liberation Sans,sans-serif">A</text><path d="M8.300 14.500l3.200-3.400l3.200 3.400z" fill="#f58a2a" stroke="#b0440c" stroke-width="0.900" stroke-linejoin="round"/></svg>
<svg class="a" style="left:1533.5px;top:315px" width="16" height="16" viewBox="0 0 16 16"><text x="4.800" y="14.500" text-anchor="middle" font-size="15" font-weight="700" fill="#8a8f94" font-family="Liberation Sans,sans-serif">A</text><text x="12" y="15" text-anchor="middle" font-size="10" font-weight="700" fill="#2f679a" stroke="#17375a" stroke-width="0.500" font-family="Liberation Sans,sans-serif">A</text><path d="M8.500 1h6.400l-3.200 3.400z" fill="#f58a2a" stroke="#b0440c" stroke-width="0.900" stroke-linejoin="round"/></svg>
<div class="a" style="left:1605px;top:308px;width:40px;height:31px;background:#f2f2f2;border:1px solid #d4d4d4;box-sizing:border-box;"></div>
<svg class="a" style="left:1610px;top:315px" width="16" height="16" viewBox="0 0 16 16"><text x="0" y="8.300" font-size="9" font-weight="700" fill="#555" font-family="Liberation Sans,sans-serif">A</text><text x="9.300" y="8.300" font-size="9" font-weight="700" fill="#555" font-family="Liberation Sans,sans-serif">V</text><path d="M5.500 0.500l3.800 9" stroke="#e0202a" stroke-width="1.300"/><path d="M1.500 13l3.200-2.800v1.700h5.600v-1.700l3.200 2.800l-3.200 2.800v-1.700h-5.600v1.700z" fill="#6fb0ee" stroke="#1a56a4" stroke-width="0.900" stroke-linejoin="round"/></svg>
<svg class="a" style="left:1633.5px;top:321px" width="6" height="4" viewBox="0 0 6 4"><path d="M0.200 0.200h5.600l-2.800 3.100z" fill="#000"/></svg>
<div class="a" style="left:1701px;top:308px;width:40px;height:31px;background:#f2f2f2;border:1px solid #d4d4d4;box-sizing:border-box;"></div>
<svg class="a" style="left:1706px;top:315px" width="16" height="16" viewBox="0 0 16 16"><text x="8.100" y="10.800" text-anchor="middle" font-size="14.600" font-weight="700" fill="#5a88b4" stroke="#17375a" stroke-width="0.900" font-family="Liberation Sans,sans-serif">A</text><rect x="0" y="12" width="16" height="4" fill="#800000"/></svg>
<svg class="a" style="left:1729.5px;top:321px" width="6" height="4" viewBox="0 0 6 4"><path d="M0.200 0.200h5.600l-2.800 3.100z" fill="#000"/></svg>
<div class="a" style="left:1777px;top:308px;width:40px;height:31px;background:#f2f2f2;border:1px solid #d4d4d4;box-sizing:border-box;"></div>
<svg class="a" style="left:1782px;top:315px" width="16" height="16" viewBox="0 0 16 16"><rect x="0" y="0.200" width="11" height="8.500" fill="#ffe21e"/><text x="0.200" y="7.600" font-size="9.400" fill="#1c1c1c" font-family="Liberation Sans,sans-serif" textLength="9.800">ab</text><path d="M7.600 8.800l5.400-7l2.600 2l-5.400 7z" fill="#eceef2" stroke="#4c5058" stroke-width="0.900"/><path d="M9 8.600l4.600-6" stroke="#fff" stroke-width="0.900"/><path d="M7.600 8.800l2.600 2l-4 1.300z" fill="#ea8a2a" stroke="#7a4008" stroke-width="0.600"/><rect x="0" y="12" width="16" height="4" fill="#ffff00"/></svg>
<svg class="a" style="left:1805.5px;top:321px" width="6" height="4" viewBox="0 0 6 4"><path d="M0.200 0.200h5.600l-2.800 3.100z" fill="#000"/></svg>
<div class="a" style="left:1491px;top:372px;width:388px;height:1px;background:#a0a0a0;"></div>
<div class="a" style="left:1496px;top:381px;width:9px;height:9px;background:#fff;border:1px solid #444;box-sizing:border-box;"></div>
<div class="a" style="left:1498px;top:385px;width:5px;height:1px;background:#111;"></div>
<span class="a t" id="sPara" style="left:1509.20px;top:379.11px;font-size:18.3px;line-height:18.3px;font-family:'Liberation Sans',sans-serif;color:#000;font-weight:700;letter-spacing:0.514px;">Paragraph</span>
<div class="a" style="left:1864px;top:387px;width:2px;height:2px;background:#111;"></div>
<div class="a" style="left:1868px;top:387px;width:2px;height:2px;background:#111;"></div>
<div class="a" style="left:1872px;top:387px;width:2px;height:2px;background:#111;"></div>
<div class="a" style="left:1503px;top:400px;width:104px;height:31px;background:#f2f2f2;border:1px solid #d4d4d4;box-sizing:border-box;"></div>
<div class="a" style="left:1505px;top:402px;width:25px;height:26px;background:#cce4f7;border:1px solid #99c9ef;box-sizing:border-box;border-radius:3px;"></div>
<svg class="a" style="left:1509px;top:407px" width="16" height="16" viewBox="0 0 16 16"><rect x="1.7" y="4" width="12.5" height="1.100" fill="#1b2430"/><rect x="1.7" y="6" width="9.1" height="1.100" fill="#1b2430"/><rect x="1.7" y="8" width="12.5" height="1.100" fill="#1b2430"/><rect x="1.7" y="10" width="9.1" height="1.100" fill="#1b2430"/><rect x="1.7" y="12" width="12.5" height="1.100" fill="#1b2430"/></svg>
<svg class="a" style="left:1534px;top:407px" width="16" height="16" viewBox="0 0 16 16"><rect x="1.7" y="4" width="12.5" height="1.100" fill="#1b2430"/><rect x="5" y="6" width="5.8" height="1.100" fill="#1b2430"/><rect x="1.7" y="8" width="12.5" height="1.100" fill="#1b2430"/><rect x="5" y="10" width="5.8" height="1.100" fill="#1b2430"/><rect x="1.7" y="12" width="12.5" height="1.100" fill="#1b2430"/></svg>
<svg class="a" style="left:1559px;top:407px" width="16" height="16" viewBox="0 0 16 16"><rect x="1.7" y="4" width="12.5" height="1.100" fill="#1b2430"/><rect x="5" y="6" width="9.2" height="1.100" fill="#1b2430"/><rect x="1.7" y="8" width="12.5" height="1.100" fill="#1b2430"/><rect x="5" y="10" width="9.2" height="1.100" fill="#1b2430"/><rect x="1.7" y="12" width="12.5" height="1.100" fill="#1b2430"/></svg>
<svg class="a" style="left:1584px;top:407px" width="16" height="16" viewBox="0 0 16 16"><rect x="1.7" y="4" width="12.5" height="1.100" fill="#1b2430"/><rect x="1.7" y="6" width="12.5" height="1.100" fill="#1b2430"/><rect x="1.7" y="8" width="12.5" height="1.100" fill="#1b2430"/><rect x="1.7" y="10" width="12.5" height="1.100" fill="#1b2430"/><rect x="1.7" y="12" width="12.5" height="1.100" fill="#1b2430"/></svg>
<div class="a" style="left:1503px;top:460px;width:76px;height:31px;background:#f2f2f2;border:1px solid #d4d4d4;box-sizing:border-box;"></div>
<svg class="a" style="left:1508.5px;top:467px" width="16" height="16" viewBox="0 0 16 16"><circle cx="2.800" cy="4.100" r="1.450" fill="#7aa6d6" stroke="#17375e" stroke-width="1.100"/><circle cx="2.800" cy="11" r="1.450" fill="#7aa6d6" stroke="#17375e" stroke-width="1.100"/><path d="M7 3.500h8M7 5.400h4.6M7 10.500h8M7 12.400h4.6" stroke="#1c1c1c" stroke-width="1.100"/></svg>
<svg class="a" style="left:1531.5px;top:473px" width="6" height="4" viewBox="0 0 6 4"><path d="M0.200 0.200h5.600l-2.800 3.100z" fill="#000"/></svg>
<svg class="a" style="left:1544.5px;top:467px" width="16" height="16" viewBox="0 0 16 16"><path d="M1.700 2.400h3.400M3.400 2.400v4.400M1.700 6.800h3.400" stroke="#4a80aa" stroke-width="1.100"/><path d="M1 9.400h5M2.500 9.400v4M4.500 9.400v4M1 13.400h5" stroke="#4a80aa" stroke-width="1.100"/><path d="M8.3 3.500h7.5M8.3 5.400h4.6M8.3 10.500h7.5M8.3 12.400h4.6" stroke="#1c1c1c" stroke-width="1.100"/></svg>
<svg class="a" style="left:1567.5px;top:473px" width="6" height="4" viewBox="0 0 6 4"><path d="M0.200 0.200h5.600l-2.800 3.100z" fill="#000"/></svg>
<div class="a" style="left:1660px;top:460px;width:54px;height:31px;background:#f2f2f2;border:1px solid #d4d4d4;box-sizing:border-box;"></div>
<svg class="a" style="left:1664px;top:466px" width="32" height="18" viewBox="0 0 32 18"><path d="M2 8l4.500-5l6 6l-5 5.500z" fill="#bcd6f4" stroke="#4a74b0" stroke-width="1" stroke-linejoin="round"/><ellipse cx="5" cy="4.500" rx="2" ry="3" fill="#dce9f8" stroke="#4a74b0" stroke-width="0.900"/><path d="M11 4c2.500 1.500 3.300 4.500 2.600 8" fill="none" stroke="#333" stroke-width="1.600"/><rect x="16.500" y="1.500" width="14" height="15" fill="#fff" stroke="#2a4a8a" stroke-width="1"/><rect x="18.500" y="3.500" width="10" height="11" fill="#fff" stroke="#111" stroke-width="1.300"/></svg>
<svg class="a" style="left:1702.5px;top:473px" width="6" height="4" viewBox="0 0 6 4"><path d="M0.200 0.200h5.600l-2.800 3.100z" fill="#000"/></svg>
<span class="a t" id="sSpacing" style="left:1501.20px;top:520.02px;font-size:18.4px;line-height:18.4px;font-family:'Liberation Sans',sans-serif;color:#000;letter-spacing:0.115px;"><u>S</u>pacing:</span>
<span class="a t" id="sIndent" style="left:1695.60px;top:520.02px;font-size:18.4px;line-height:18.4px;font-family:'Liberation Sans',sans-serif;color:#000;letter-spacing:0.367px;"><u>I</u>ndent:</span>
<div class="a" style="left:1501px;top:544px;width:54px;height:31px;background:#f2f2f2;border:1px solid #d4d4d4;box-sizing:border-box;"></div>
<svg class="a" style="left:1507px;top:551px" width="16" height="16" viewBox="0 0 16 16"><path d="M0.600 5.5l3-3.600l3 3.600z" fill="#9fd0f6" stroke="#17509c" stroke-width="1" stroke-linejoin="round"/><path d="M0.600 10h6l-3 3.600z" fill="#9fd0f6" stroke="#17509c" stroke-width="1" stroke-linejoin="round"/><path d="M9 1.5h7" stroke="#2a3442" stroke-width="1"/><path d="M9 3.5h7" stroke="#2a3442" stroke-width="1"/><path d="M9 5.5h7" stroke="#2a3442" stroke-width="1"/><path d="M9 10.5h7" stroke="#2a3442" stroke-width="1"/><path d="M9 12.5h7" stroke="#2a3442" stroke-width="1"/><path d="M9 14.5h7" stroke="#2a3442" stroke-width="1"/></svg>
<svg class="a" style="left:1532px;top:551px" width="16" height="16" viewBox="0 0 16 16"><path d="M0.600 2h6l-3 3.600z" fill="#9fd0f6" stroke="#17509c" stroke-width="1" stroke-linejoin="round"/><path d="M0.600 13.6l3-3.600l3 3.600z" fill="#9fd0f6" stroke="#17509c" stroke-width="1" stroke-linejoin="round"/><path d="M9 2.5h7" stroke="#2a3442" stroke-width="1"/><path d="M9 4.5h7" stroke="#2a3442" stroke-width="1"/><path d="M9 6.5h7" stroke="#2a3442" stroke-width="1"/><path d="M9 9.5h7" stroke="#2a3442" stroke-width="1"/><path d="M9 11.5h7" stroke="#2a3442" stroke-width="1"/><path d="M9 13.5h7" stroke="#2a3442" stroke-width="1"/></svg>
<div class="a" style="left:1695px;top:544px;width:84px;height:31px;background:#f2f2f2;border:1px solid #d4d4d4;box-sizing:border-box;"></div>
<svg class="a" style="left:1701px;top:551px" width="16" height="16" viewBox="0 0 16 16"><path d="M5.300 3.300h10.500M5.300 13.500h10.500M8.300 1.300v2M8.300 13.500v2.200" stroke="#1c1c1c" stroke-width="0.900"/><path d="M9.200 7h6.600" stroke="#1a7ad4" stroke-width="1.700"/><path d="M9.200 9.800h4.500" stroke="#1a7ad4" stroke-width="1.700"/><path d="M0.600 8.500l3.700-3.300v2h3.300v2.600h-3.300v2z" fill="#f58a1e" stroke="#a0280a" stroke-width="1.100" stroke-linejoin="round"/><path d="M2.300 8.300l1.800-1.500v1h2.700" fill="none" stroke="#fdd08a" stroke-width="0.600"/></svg>
<svg class="a" style="left:1726px;top:551px" width="16" height="16" viewBox="0 0 16 16"><path d="M5.300 3.300h10.500M5.300 13.500h10.500M8.300 1.300v2M8.300 13.500v2.200" stroke="#1c1c1c" stroke-width="0.900"/><path d="M9.200 7h6.600" stroke="#1a7ad4" stroke-width="1.700"/><path d="M9.200 9.800h4.500" stroke="#1a7ad4" stroke-width="1.700"/><path d="M7.900 8.500l-3.700-3.300v2h-3.300v2.600h3.300v2z" fill="#f58a1e" stroke="#a0280a" stroke-width="1.100" stroke-linejoin="round"/><path d="M6.200 8.300l-1.800-1.500v1h-2.700" fill="none" stroke="#fdd08a" stroke-width="0.600"/></svg>
<svg class="a" style="left:1751px;top:551px" width="22" height="16" viewBox="0 0 22 16"><path d="M0.600 2.800h3v-2.400l4.200 4.100l-4.200 4.100v-2.400h-3z" fill="#8fdc3c" stroke="#3c8a12" stroke-width="0.900" stroke-linejoin="round"/><path d="M9.500 2.300v3M13 2.300v3M9.500 3.800h3.500" stroke="#1d3f8a" stroke-width="1"/><path d="M11 1.500h10M15.500 4.200h5.500M15.500 6.400h5.500M15.500 8.600h5.500M15.500 10.800h5.500M15.500 13h5.500M15.500 15.200h5.500" stroke="#2a57a8" stroke-width="1.100"/></svg>
<div class="a" style="left:1536px;top:612px;width:149px;height:38px;background:#fff;border:1px solid #9ea3ad;box-sizing:border-box;"></div>
<div class="a" style="left:1668px;top:614px;width:15px;height:17px;background:#f0f0f0;border:1px solid #c4c4c4;box-sizing:border-box;"></div>
<div class="a" style="left:1668px;top:631px;width:15px;height:17px;background:#f0f0f0;border:1px solid #c4c4c4;box-sizing:border-box;"></div>
<svg class="a" style="left:1672.5px;top:621px" width="6" height="4" viewBox="0 0 6 4"><path d="M0 3.7h6l-3-3.4z" fill="#000"/></svg>
<svg class="a" style="left:1672.5px;top:638px" width="6" height="4" viewBox="0 0 6 4"><path d="M0 0.3h6l-3 3.4z" fill="#000"/></svg>
<span class="a t" id="sp1" style="left:1539.40px;top:622.72px;font-size:18.4px;line-height:18.4px;font-family:'Liberation Sans',sans-serif;color:#000;letter-spacing:-0.500px;">0.00 "</span>
<div class="a" style="left:1730px;top:612px;width:139px;height:38px;background:#fff;border:1px solid #9ea3ad;box-sizing:border-box;"></div>
<div class="a" style="left:1852px;top:614px;width:15px;height:17px;background:#f0f0f0;border:1px solid #c4c4c4;box-sizing:border-box;"></div>
<div class="a" style="left:1852px;top:631px;width:15px;height:17px;background:#f0f0f0;border:1px solid #c4c4c4;box-sizing:border-box;"></div>
<svg class="a" style="left:1856.5px;top:621px" width="6" height="4" viewBox="0 0 6 4"><path d="M0 3.7h6l-3-3.4z" fill="#000"/></svg>
<svg class="a" style="left:1856.5px;top:638px" width="6" height="4" viewBox="0 0 6 4"><path d="M0 0.3h6l-3 3.4z" fill="#000"/></svg>
<span class="a t" id="sp2" style="left:1733.40px;top:622.72px;font-size:18.4px;line-height:18.4px;font-family:'Liberation Sans',sans-serif;color:#000;letter-spacing:-0.500px;">0.00 "</span>
<div class="a" style="left:1536px;top:665px;width:149px;height:38px;background:#fff;border:1px solid #9ea3ad;box-sizing:border-box;"></div>
<div class="a" style="left:1668px;top:667px;width:15px;height:17px;background:#f0f0f0;border:1px solid #c4c4c4;box-sizing:border-box;"></div>
<div class="a" style="left:1668px;top:684px;width:15px;height:17px;background:#f0f0f0;border:1px solid #c4c4c4;box-sizing:border-box;"></div>
<svg class="a" style="left:1672.5px;top:674px" width="6" height="4" viewBox="0 0 6 4"><path d="M0 3.7h6l-3-3.4z" fill="#000"/></svg>
<svg class="a" style="left:1672.5px;top:691px" width="6" height="4" viewBox="0 0 6 4"><path d="M0 0.3h6l-3 3.4z" fill="#000"/></svg>
<span class="a t" id="sp3" style="left:1539.40px;top:675.72px;font-size:18.4px;line-height:18.4px;font-family:'Liberation Sans',sans-serif;color:#000;letter-spacing:-0.500px;">0.00 "</span>
<div class="a" style="left:1730px;top:665px;width:139px;height:38px;background:#fff;border:1px solid #9ea3ad;box-sizing:border-box;"></div>
<div class="a" style="left:1852px;top:667px;width:15px;height:17px;background:#f0f0f0;border:1px solid #c4c4c4;box-sizing:border-box;"></div>
<div class="a" style="left:1852px;top:684px;width:15px;height:17px;background:#f0f0f0;border:1px solid #c4c4c4;box-sizing:border-box;"></div>
<svg class="a" style="left:1856.5px;top:674px" width="6" height="4" viewBox="0 0 6 4"><path d="M0 3.7h6l-3-3.4z" fill="#000"/></svg>
<svg class="a" style="left:1856.5px;top:691px" width="6" height="4" viewBox="0 0 6 4"><path d="M0 0.3h6l-3 3.4z" fill="#000"/></svg>
<span class="a t" id="sp4" style="left:1733.40px;top:675.72px;font-size:18.4px;line-height:18.4px;font-family:'Liberation Sans',sans-serif;color:#000;letter-spacing:-0.500px;">0.00 "</span>
<div class="a" style="left:1730px;top:718px;width:139px;height:38px;background:#fff;border:1px solid #9ea3ad;box-sizing:border-box;"></div>
<div class="a" style="left:1852px;top:720px;width:15px;height:17px;background:#f0f0f0;border:1px solid #c4c4c4;box-sizing:border-box;"></div>
<div class="a" style="left:1852px;top:737px;width:15px;height:17px;background:#f0f0f0;border:1px solid #c4c4c4;box-sizing:border-box;"></div>
<svg class="a" style="left:1856.5px;top:727px" width="6" height="4" viewBox="0 0 6 4"><path d="M0 3.7h6l-3-3.4z" fill="#000"/></svg>
<svg class="a" style="left:1856.5px;top:744px" width="6" height="4" viewBox="0 0 6 4"><path d="M0 0.3h6l-3 3.4z" fill="#000"/></svg>
<span class="a t" id="sp5" style="left:1733.40px;top:728.72px;font-size:18.4px;line-height:18.4px;font-family:'Liberation Sans',sans-serif;color:#000;letter-spacing:-0.500px;">0.00 "</span>
<svg class="a" style="left:1505px;top:625px" width="16" height="16" viewBox="0 0 16 16"><path d="M5.500 0.700h4M7.500 0.700v5M5.500 5.700h4" stroke="#2a4f8e" stroke-width="1" fill="none"/><path d="M0.500 8.500h15M0.500 11h15M0.500 13.500h15" stroke="#2a4f8e" stroke-width="1.300"/><path d="M0.500 9.600h15M0.500 12.100h15M0.500 14.600h15" stroke="#b9c8e2" stroke-width="0.900"/></svg>
<svg class="a" style="left:1505px;top:679px" width="16" height="16" viewBox="0 0 16 16"><path d="M5.500 10.300h4M7.500 10.300v5M5.500 15.300h4" stroke="#2a4f8e" stroke-width="1" fill="none"/><path d="M0.500 1.500h15M0.500 4h15M0.500 6.500h15" stroke="#2a4f8e" stroke-width="1.300"/><path d="M0.500 2.600h15M0.500 5.100h15M0.500 7.600h15" stroke="#b9c8e2" stroke-width="0.900"/></svg>
<svg class="a" style="left:1699px;top:624px" width="16" height="16" viewBox="0 0 16 16"><path d="M0.700 1.200v3M6 1.200v3M0.700 2.700h5.300" stroke="#2a4f8e" stroke-width="1" fill="none"/><path d="M9 2.5h6.5" stroke="#2a4f8e" stroke-width="1.200"/><path d="M9 3.6h6.5" stroke="#b9c8e2" stroke-width="0.800"/><path d="M9 5.7h6.5" stroke="#2a4f8e" stroke-width="1.200"/><path d="M9 6.800000000000001h6.5" stroke="#b9c8e2" stroke-width="0.800"/><path d="M9 8.9h6.5" stroke="#2a4f8e" stroke-width="1.200"/><path d="M9 10.0h6.5" stroke="#b9c8e2" stroke-width="0.800"/><path d="M9 12.1h6.5" stroke="#2a4f8e" stroke-width="1.200"/><path d="M9 13.2h6.5" stroke="#b9c8e2" stroke-width="0.800"/><path d="M9 15.2h6.5" stroke="#2a4f8e" stroke-width="1.200"/><path d="M9 16.3h6.5" stroke="#b9c8e2" stroke-width="0.800"/></svg>
<svg class="a" style="left:1699px;top:678px" width="16" height="16" viewBox="0 0 16 16"><path d="M10 0.500v3M15.300 0.500v3M10 2h5.300" stroke="#2a4f8e" stroke-width="1" fill="none"/><path d="M0.5 2h6.5" stroke="#2a4f8e" stroke-width="1.200"/><path d="M0.5 3.1h6.5" stroke="#b9c8e2" stroke-width="0.800"/><path d="M0.5 5.2h6.5" stroke="#2a4f8e" stroke-width="1.200"/><path d="M0.5 6.300000000000001h6.5" stroke="#b9c8e2" stroke-width="0.800"/><path d="M0.5 8.4h6.5" stroke="#2a4f8e" stroke-width="1.200"/><path d="M0.5 9.5h6.5" stroke="#b9c8e2" stroke-width="0.800"/><path d="M0.5 11.6h6.5" stroke="#2a4f8e" stroke-width="1.200"/><path d="M0.5 12.7h6.5" stroke="#b9c8e2" stroke-width="0.800"/><path d="M0.5 14.8h6.5" stroke="#2a4f8e" stroke-width="1.200"/><path d="M0.5 15.9h6.5" stroke="#b9c8e2" stroke-width="0.800"/></svg>
<svg class="a" style="left:1699px;top:732px" width="16" height="16" viewBox="0 0 16 16"><path d="M0.700 0.500v3M5 0.500v3M0.700 2h4.300" stroke="#2a4f8e" stroke-width="1" fill="none"/><path d="M8 2h7.5" stroke="#2a4f8e" stroke-width="1.200"/><path d="M8 3.1h7.5" stroke="#b9c8e2" stroke-width="0.800"/><path d="M0.5 5.2h15.0" stroke="#2a4f8e" stroke-width="1.200"/><path d="M0.5 6.300000000000001h15.0" stroke="#b9c8e2" stroke-width="0.800"/><path d="M0.5 8.4h15.0" stroke="#2a4f8e" stroke-width="1.200"/><path d="M0.5 9.5h15.0" stroke="#b9c8e2" stroke-width="0.800"/><path d="M0.5 11.6h15.0" stroke="#2a4f8e" stroke-width="1.200"/><path d="M0.5 12.7h15.0" stroke="#b9c8e2" stroke-width="0.800"/><path d="M0.5 14.6h15.0" stroke="#2a4f8e" stroke-width="1.200"/><path d="M0.5 15.7h15.0" stroke="#b9c8e2" stroke-width="0.800"/></svg>
<div class="a" style="left:1501px;top:716px;width:42px;height:31px;background:#f2f2f2;border:1px solid #d4d4d4;box-sizing:border-box;"></div>
<svg class="a" style="left:1507px;top:723px" width="18" height="16" viewBox="0 0 18 16"><path d="M3.500 1.500v13M0.800 4.300l2.700-3.300l2.700 3.300M0.800 11.700l2.700 3.300l2.700-3.300" stroke="#2a4f8e" stroke-width="1.300" fill="none"/><path d="M7.5 3.8h10.0" stroke="#2a4f8e" stroke-width="1.200"/><path d="M7.5 4.9h10.0" stroke="#b9c8e2" stroke-width="0.800"/><path d="M7.5 7.6h10.0" stroke="#2a4f8e" stroke-width="1.200"/><path d="M7.5 8.7h10.0" stroke="#b9c8e2" stroke-width="0.800"/><path d="M7.5 11.4h10.0" stroke="#2a4f8e" stroke-width="1.200"/><path d="M7.5 12.5h10.0" stroke="#b9c8e2" stroke-width="0.800"/></svg>
<svg class="a" style="left:1531.5px;top:729px" width="6" height="4" viewBox="0 0 6 4"><path d="M0.200 0.200h5.600l-2.800 3.100z" fill="#000"/></svg>
<div class="a" style="left:1491px;top:780px;width:388px;height:1px;background:#a0a0a0;"></div>
<div class="a" style="left:1496px;top:789px;width:9px;height:9px;background:#fff;border:1px solid #444;box-sizing:border-box;"></div>
<div class="a" style="left:1498px;top:793px;width:5px;height:1px;background:#111;"></div>
<div class="a" style="left:1500px;top:791px;width:1px;height:5px;background:#111;"></div>
<span class="a t" id="sPage" style="left:1509.20px;top:787.21px;font-size:18.3px;line-height:18.3px;font-family:'Liberation Sans',sans-serif;color:#000;font-weight:700;letter-spacing:0.534px;">Page</span>
<div class="a" style="left:1864px;top:795px;width:2px;height:2px;background:#111;"></div>
<div class="a" style="left:1868px;top:795px;width:2px;height:2px;background:#111;"></div>
<div class="a" style="left:1872px;top:795px;width:2px;height:2px;background:#111;"></div>
<div class="a" style="left:1491px;top:807px;width:388px;height:1px;background:#a0a0a0;"></div>
<svg class="a" style="left:1892px;top:144px" width="17" height="18" viewBox="0 0 17 18"><path d="M0 1.850h16M0 5.900h16M0 9.900h16" stroke="#3c4a5a" stroke-width="1.500"/><path d="M7.900 13h7.300l-3.650 3.900z" fill="#000"/></svg>
<div class="a" style="left:1889px;top:172px;width:23px;height:1px;background:#a8a8a8;"></div>
<div class="a" style="left:1884px;top:176px;width:32px;height:32px;background:#f2f2f2;border:1px solid #b0b0b0;box-sizing:border-box;border-radius:4px;"></div>
<svg class="a" style="left:1888px;top:179px" width="24" height="26" viewBox="0 0 24 26"><ellipse cx="11.500" cy="23.300" rx="8.500" ry="1.800" fill="#c4c4c4"/><path d="M1.500 7l10 5.500v9.500l-10-5.500z" fill="#1a94ee"/><path d="M21.500 7l-10 5.500v9.500l10-5.500z" fill="#7ccc1e"/><path d="M11.500 1.500l5 2.750l-5 2.750l-5-2.750zM6.500 4.250l5 2.750l-5 2.750l-5-2.750z" fill="#4cb8fa"/><path d="M16.500 4.250l5 2.750l-5 2.750l-5-2.750zM11.500 7l5 2.750l-5 2.750l-5-2.750z" fill="#a2e444"/><path d="M6.500 4.250l10 5.500M16.500 4.250l-10 5.500M1.500 11.750l10 5.500l10-5.500M6.500 9.750v9.500M16.500 9.750v9.500M11.500 12.500v9.500M1.500 7l10 5.500l10-5.500" fill="none" stroke="#eefaff" stroke-width="0.800"/><path d="M7.500 17l4-2.200l4 2.200v4.300l-4 2.200l-4-2.200z" fill="#86d62a" stroke="#f0ffe0" stroke-width="0.700"/><path d="M7.500 17l4 2.200l4-2.200M11.500 19.200v4.300" fill="none" stroke="#f0ffe0" stroke-width="0.700"/></svg>
<svg class="a" style="left:1888px;top:213px" width="24" height="26" viewBox="0 0 24 26"><ellipse cx="11" cy="24.600" rx="10" ry="1.500" fill="#c6c6c6"/><path d="M5.400 22.500l2.600-12.800c3-2.600 8-1.400 9.800 2.300c0.600 2.400 0.200 4.400-0.800 6z" fill="#1e86de"/><path d="M5.400 22.500l2.600-12.800l2 1.400l-3.200 10.800z" fill="#4aa6f2"/><ellipse cx="13.400" cy="11.900" rx="5.200" ry="4.300" transform="rotate(25 13.400 11.900)" fill="#0e2a4a"/><path d="M10.600 10.600c1.600-1.600 4.200-1.800 6-0.600c-2 0-3.800 0.800-5 2.400z" fill="#2a6aa8"/><path d="M13 15.400c3-1.600 7-0.400 7.800 3c0.400 2-1.200 4-4.400 4.200c2-1.200 2.400-3 1-4.400c-1.200-1.200-2.800-1.600-4.400-2.800z" fill="#62b21c"/><path d="M2.800 7.400c0-3 3.400-4.600 6-3.200c1.200 0.800 1.600 2.800 1.400 5.400c-0.800-2-2-3.200-3.800-3.200c-1.400 0-2.600 0.400-3.600 1z" fill="#d8740c"/><path d="M13.40 1.40L14.28 3.19L16.25 3.47L14.83 4.86L15.16 6.83L13.40 5.90L11.64 6.83L11.97 4.86L10.55 3.47L12.52 3.19z" fill="#c656e6"/><path d="M20.00 2.00L21.23 4.50L23.99 4.90L22.00 6.85L22.47 9.60L20.00 8.30L17.53 9.60L18.00 6.85L16.01 4.90L18.77 4.50z" fill="#f6c836"/><path d="M3.70 9.40L4.58 11.19L6.55 11.47L5.13 12.86L5.46 14.83L3.70 13.90L1.94 14.83L2.27 12.86L0.85 11.47L2.82 11.19z" fill="#f252a8"/><path d="M21.80 10.70L22.62 12.37L24.46 12.63L23.13 13.93L23.45 15.77L21.80 14.90L20.15 15.77L20.47 13.93L19.14 12.63L20.98 12.37z" fill="#f2505e"/><circle cx="13.400" cy="4.400" r="0.900" fill="#e8b0f6"/><circle cx="20" cy="6.200" r="1.400" fill="#fbe48c"/><circle cx="3.700" cy="12.400" r="0.900" fill="#f9a8d2"/><circle cx="21.800" cy="13.500" r="0.800" fill="#f9a8b0"/></svg>
<svg class="a" style="left:1888px;top:249px" width="24" height="26" viewBox="0 0 24 26"><ellipse cx="13.400" cy="23.900" rx="10" ry="1.400" fill="#c6c6c6"/><path d="M0.300 6.400l16.300-5.200l7.300 10.800l-13.300 9.400l-6.900-2.400z" fill="#fdfdfd" stroke="#c4c8ce" stroke-width="0.800" stroke-linejoin="round"/><path d="M3.400 8l12.400-4l5.400 8l-10.600 7.400l-4.600-1.600z" fill="#7cc4f6"/><path d="M3.400 8l5.800-1.900l-4.600 3.600z" fill="#6ad820"/><path d="M8.800 17.600l11.600-7l0.800 1.400l-10.600 7.400z" fill="#5cbc2c"/><path d="M5.800 12.800l3.600-3.600l3.600 1.200" fill="none" stroke="#1f58b0" stroke-width="1.400" stroke-linejoin="round"/><path d="M6.400 12.600l3-3l3 1.200l0.600 4.400l-4.600 2z" fill="#e8f4fe" opacity="0.900"/><path d="M9.600 13.800l1.600-0.600l0.800 2.600l-1.600 0.700z" fill="#b8741c"/><path d="M14.600 13.600l4.600-2.800" stroke="#8a4a1c" stroke-width="1.800"/></svg>
<svg class="a" style="left:1888px;top:284px" width="24" height="26" viewBox="0 0 24 26"><ellipse cx="12" cy="24.300" rx="9" ry="1.400" fill="#c9c9c9"/><circle cx="12" cy="12" r="10.200" fill="#fbfbfb" stroke="#f5a21a" stroke-width="1.900"/><circle cx="12" cy="12" r="11.200" fill="none" stroke="#e07c08" stroke-width="0.500"/><circle cx="12" cy="12" r="8.600" fill="none" stroke="#d8d8d8" stroke-width="0.600"/><text x="12" y="7.300" text-anchor="middle" font-size="5.500" font-weight="700" fill="#333" font-family="Liberation Sans,sans-serif">N</text><path d="M18 6l-4.300 8l-3.700-3.700z" fill="#e8403a"/><path d="M6 18l4.300-8l3.700 3.700z" fill="#3c8ae0"/><circle cx="12" cy="12" r="1" fill="#fff"/></svg>
<div class="a" style="left:0px;top:1004px;width:1920px;height:28px;background:#f0f0f0;"></div>
<div class="a" style="left:0px;top:1004px;width:1481px;height:1px;background:#fafafa;"></div>
<span class="a t" id="sbPage" style="left:10.80px;top:1013.40px;font-size:15px;line-height:15px;font-family:'Liberation Sans',sans-serif;color:#000;letter-spacing:-0.033px;">Page 1 / 1</span>
<span class="a t" id="sbDefault" style="left:368.60px;top:1013.40px;font-size:15px;line-height:15px;font-family:'Liberation Sans',sans-serif;color:#000;letter-spacing:0.299px;">Default</span>
<span class="a t" id="sbLang" style="left:842.60px;top:1013.40px;font-size:15px;line-height:15px;font-family:'Liberation Sans',sans-serif;color:#000;letter-spacing:-0.250px;">English (USA)</span>
<span class="a t" id="sbInsrt" style="left:1083.20px;top:1013.40px;font-size:15px;line-height:15px;font-family:'Liberation Sans',sans-serif;color:#000;letter-spacing:-0.900px;">INSRT</span>
<span class="a t" id="sbStd" style="left:1139.00px;top:1013.40px;font-size:15px;line-height:15px;font-family:'Liberation Sans',sans-serif;color:#000;letter-spacing:-0.900px;">STD</span>
<span class="a t" id="sbStar" style="left:1180.00px;top:1013.40px;font-size:15px;line-height:15px;font-family:'Liberation Sans',sans-serif;color:#000;">*</span>
<span class="a t" id="sbZoom" style="left:1872.20px;top:1013.40px;font-size:15px;line-height:15px;font-family:'Liberation Sans',sans-serif;color:#000;letter-spacing:-0.600px;">199 %</span>
<div class="a" style="left:361px;top:1009px;width:1px;height:21px;background:#a8a8a8;"></div>
<div class="a" style="left:700px;top:1009px;width:1px;height:21px;background:#a8a8a8;"></div>
<div class="a" style="left:1079px;top:1009px;width:1px;height:21px;background:#a8a8a8;"></div>
<div class="a" style="left:1134px;top:1009px;width:1px;height:21px;background:#a8a8a8;"></div>
<div class="a" style="left:1176px;top:1009px;width:1px;height:21px;background:#a8a8a8;"></div>
<div class="a" style="left:1195px;top:1009px;width:1px;height:21px;background:#a8a8a8;"></div>
<div class="a" style="left:1226px;top:1009px;width:1px;height:21px;background:#a8a8a8;"></div>
<div class="a" style="left:1645px;top:1009px;width:1px;height:21px;background:#a8a8a8;"></div>
<div class="a" style="left:1723px;top:1009px;width:1px;height:21px;background:#a8a8a8;"></div>
<div class="a" style="left:1868px;top:1009px;width:1px;height:21px;background:#a8a8a8;"></div>
<svg class="a" style="left:1653px;top:1013px" width="11" height="13" viewBox="0 0 11 13"><path d="M1.500 0.500h5.500l3 3v9h-8.500z" fill="#f2f4f8" stroke="#8a8e96" stroke-width="1"/><path d="M7 0.500v3h3" fill="none" stroke="#8a8e96" stroke-width="0.800"/></svg>
<svg class="a" style="left:1668px;top:1013px" width="21" height="13" viewBox="0 0 21 13"><path d="M1.500 0.500h5l2.500 2.500v9.500h-7.500z" fill="#c4d4f0" stroke="#1f4a94" stroke-width="1"/><path d="M6.500 0.500v2.500h2.500" fill="none" stroke="#1f4a94" stroke-width="0.800"/><path d="M11.500 0.500h5l2.500 2.500v9.500h-7.500z" fill="#c4d4f0" stroke="#1f4a94" stroke-width="1"/><path d="M16.500 0.500v2.500h2.500" fill="none" stroke="#1f4a94" stroke-width="0.800"/></svg>
<svg class="a" style="left:1693px;top:1013px" width="19" height="13" viewBox="0 0 19 13"><path d="M1.500 3l2.500-2.500h5v12h-7.500z" fill="#f0f0f0" stroke="#8a8e96" stroke-width="1"/><path d="M9 0.500h5l2.500 2.500v9.500h-7.500z" fill="#f0f0f0" stroke="#8a8e96" stroke-width="1"/></svg>
<svg class="a" style="left:1728px;top:1013px" width="134" height="14" viewBox="0 0 134 14"><circle cx="6.8" cy="7" r="5" fill="#fff" stroke="#555" stroke-width="1"/><path d="M3.8 7h6" stroke="#1c3c74" stroke-width="1.4"/><rect x="17.5" y="5.7" width="98" height="2.2" fill="#e6e6e6" stroke="#9a9a9a" stroke-width="0.8"/><path d="M48.5 1.5v11M65.2 1.5v11" stroke="#666" stroke-width="1"/><circle cx="74.3" cy="6.6" r="4.2" fill="#8fabe0" stroke="#6c8cc8" stroke-width="0.8"/><circle cx="126.3" cy="7" r="5" fill="#fff" stroke="#555" stroke-width="1"/><path d="M123.3 7h6M126.3 4v6" stroke="#1c3c74" stroke-width="1.4"/></svg>
</body></html>
